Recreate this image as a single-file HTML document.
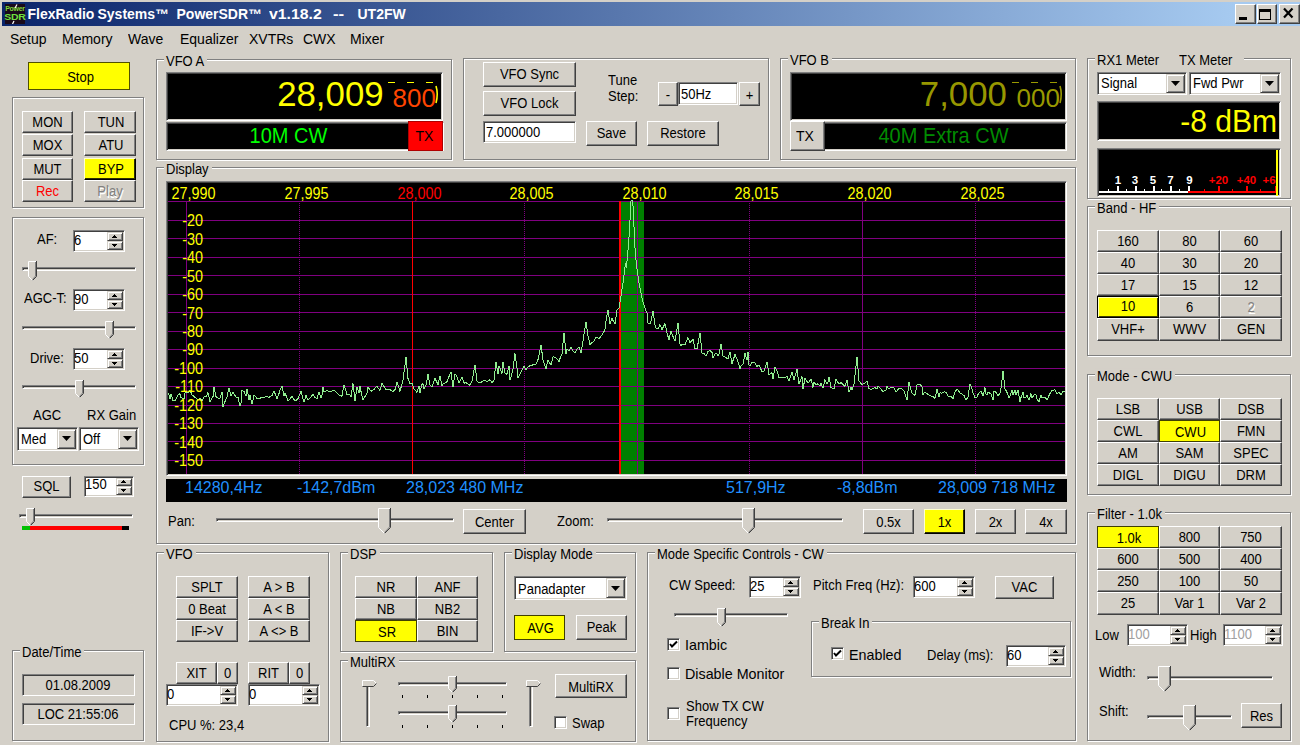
<!DOCTYPE html>
<html><head><meta charset="utf-8"><style>
html,body{margin:0;padding:0;width:1300px;height:745px;overflow:hidden;background:#D4D0C8;}
body{position:relative;font-family:"Liberation Sans",sans-serif;font-size:13px;color:#000;}
body>div,body>svg{position:absolute;box-sizing:border-box;}
.t{white-space:pre;}
.b{overflow:hidden;}
svg text{font-family:"Liberation Sans",sans-serif;}
</style></head><body>
<div style="left:0;top:0;width:1300px;height:745px;background:#D4D0C8;"></div>
<div style="left:2px;top:2px;width:1298px;height:24px;background:linear-gradient(to right,#0A246A 0px,#A6CAF0 1232px);"></div>
<div style="left:5px;top:4px;width:20px;height:20px;background:#1a0a1a;"></div>
<div class="t" style="left:5px;top:5px;width:20px;font-size:7px;line-height:7px;color:#7ed63a;font-weight:bold;text-align:center;letter-spacing:-0.3px">Power</div>
<div class="t" style="left:4px;top:12px;width:22px;font-size:10.5px;line-height:10px;color:#6ee040;font-weight:bold;text-align:center;letter-spacing:-0.3px;transform:scaleY(0.85);">SDR</div>
<svg style="left:5px;top:4px" width="20" height="20"><path d="M12,0.5 L10,4" stroke="#fff" stroke-width="1.2"/><path d="M9,17 L7.5,20" stroke="#fff" stroke-width="1.2"/></svg>
<div class="t" style="left:27.5px;top:7.15px;font-size:14px;line-height:14px;color:#fff;font-weight:bold;white-space:pre;transform:scaleX(1);transform-origin:left;">FlexRadio</div>
<div class="t" style="left:97.5px;top:7.15px;font-size:14px;line-height:14px;color:#fff;font-weight:bold;white-space:pre;transform:scaleX(1);transform-origin:left;">Systems™</div>
<div class="t" style="left:176.5px;top:7.15px;font-size:14px;line-height:14px;color:#fff;font-weight:bold;white-space:pre;transform:scaleX(1);transform-origin:left;">PowerSDR™</div>
<div class="t" style="left:268.5px;top:7.15px;font-size:14px;line-height:14px;color:#fff;font-weight:bold;white-space:pre;transform:scaleX(1.13);transform-origin:left;">v1.18.2</div>
<div class="t" style="left:333px;top:7.15px;font-size:14px;line-height:14px;color:#fff;font-weight:bold;white-space:pre;transform:scaleX(1.2);transform-origin:left;">--</div>
<div class="t" style="left:357.5px;top:7.15px;font-size:14px;line-height:14px;color:#fff;font-weight:bold;white-space:pre;transform:scaleX(1);transform-origin:left;">UT2FW</div>
<div style="left:1235px;top:4px;width:21px;height:20px;background:#D4D0C8;border-top:1px solid #fff;border-left:1px solid #fff;border-right:1px solid #404040;border-bottom:1px solid #404040;box-shadow:inset -1px -1px 0 #808080;"></div>
<div style="left:1257px;top:4px;width:20px;height:20px;background:#D4D0C8;border-top:1px solid #fff;border-left:1px solid #fff;border-right:1px solid #404040;border-bottom:1px solid #404040;box-shadow:inset -1px -1px 0 #808080;"></div>
<div style="left:1279px;top:4px;width:21px;height:20px;background:#D4D0C8;border-top:1px solid #fff;border-left:1px solid #fff;border-right:1px solid #404040;border-bottom:1px solid #404040;box-shadow:inset -1px -1px 0 #808080;"></div>
<div style="left:1239px;top:17px;width:8px;height:3px;background:#000;"></div>
<div style="left:1259px;top:9px;width:12px;height:11px;border:1px solid #000;border-top:3px solid #000;box-sizing:border-box;"></div>
<svg style="left:1282px;top:7px" width="13" height="13"><path d="M2,1.5 L10.5,10.5 M10.5,1.5 L2,10.5" stroke="#000" stroke-width="2.2"/></svg>
<div class="t" style="left:10px;top:32.15px;font-size:14px;line-height:14px;color:#000;font-weight:normal;transform:scaleY(1.1);transform-origin:50% 11.85px;">Setup</div>
<div class="t" style="left:62px;top:32.15px;font-size:14px;line-height:14px;color:#000;font-weight:normal;transform:scaleY(1.1);transform-origin:50% 11.85px;">Memory</div>
<div class="t" style="left:128px;top:32.15px;font-size:14px;line-height:14px;color:#000;font-weight:normal;transform:scaleY(1.1);transform-origin:50% 11.85px;">Wave</div>
<div class="t" style="left:180px;top:32.15px;font-size:14px;line-height:14px;color:#000;font-weight:normal;transform:scaleY(1.1);transform-origin:50% 11.85px;">Equalizer</div>
<div class="t" style="left:249px;top:32.15px;font-size:14px;line-height:14px;color:#000;font-weight:normal;transform:scaleY(1.1);transform-origin:50% 11.85px;">XVTRs</div>
<div class="t" style="left:303px;top:32.15px;font-size:14px;line-height:14px;color:#000;font-weight:normal;transform:scaleY(1.1);transform-origin:50% 11.85px;">CWX</div>
<div class="t" style="left:350px;top:32.15px;font-size:14px;line-height:14px;color:#000;font-weight:normal;transform:scaleY(1.1);transform-origin:50% 11.85px;">Mixer</div>
<div class="b" style="left:28px;top:62px;width:102px;height:28px;background:#FFFF00;border:1px solid #505000;"><span style="position:absolute;left:3px;right:0;top:0px;bottom:0;display:flex;align-items:center;justify-content:center;font-size:13px;color:#000;transform:scaleY(1.1);">Stop</span></div>
<div style="left:12px;top:97px;width:132px;height:111px;border:1px solid #808080;box-sizing:border-box;box-shadow:1px 1px 0 #fff, inset 1px 1px 0 #fff;"></div>
<div class="b" style="left:22px;top:111px;width:51px;height:22px;background:#D4D0C8;border-top:1px solid #fff;border-left:1px solid #fff;border-right:1px solid #404040;border-bottom:1px solid #404040;box-shadow:inset -1px -1px 0 #808080;"><span style="position:absolute;left:0px;right:0;top:-2px;bottom:0;display:flex;align-items:center;justify-content:center;font-size:13px;color:#000;transform:scaleY(1.1);">MON</span></div>
<div class="b" style="left:84px;top:111px;width:52px;height:22px;background:#D4D0C8;border-top:1px solid #fff;border-left:1px solid #fff;border-right:1px solid #404040;border-bottom:1px solid #404040;box-shadow:inset -1px -1px 0 #808080;"><span style="position:absolute;left:2px;right:0;top:-2px;bottom:0;display:flex;align-items:center;justify-content:center;font-size:13px;color:#000;transform:scaleY(1.1);">TUN</span></div>
<div class="b" style="left:22px;top:134px;width:51px;height:22px;background:#D4D0C8;border-top:1px solid #fff;border-left:1px solid #fff;border-right:1px solid #404040;border-bottom:1px solid #404040;box-shadow:inset -1px -1px 0 #808080;"><span style="position:absolute;left:0px;right:0;top:-0.2px;bottom:0;display:flex;align-items:center;justify-content:center;font-size:13px;color:#000;transform:scaleY(1.1);">MOX</span></div>
<div class="b" style="left:84px;top:134px;width:52px;height:22px;background:#D4D0C8;border-top:1px solid #fff;border-left:1px solid #fff;border-right:1px solid #404040;border-bottom:1px solid #404040;box-shadow:inset -1px -1px 0 #808080;"><span style="position:absolute;left:2px;right:0;top:-0.2px;bottom:0;display:flex;align-items:center;justify-content:center;font-size:13px;color:#000;transform:scaleY(1.1);">ATU</span></div>
<div class="b" style="left:22px;top:158px;width:51px;height:22px;background:#D4D0C8;border-top:1px solid #fff;border-left:1px solid #fff;border-right:1px solid #404040;border-bottom:1px solid #404040;box-shadow:inset -1px -1px 0 #808080;"><span style="position:absolute;left:0px;right:0;top:-0.2px;bottom:0;display:flex;align-items:center;justify-content:center;font-size:13px;color:#000;transform:scaleY(1.1);">MUT</span></div>
<div class="b" style="left:84px;top:158px;width:52px;height:22px;background:#FFFF00;border-top:1px solid #FFFFD0;border-left:1px solid #FFFFD0;border-right:1px solid #000;border-bottom:1px solid #000;box-shadow:inset -1px -1px 0 #303000;"><span style="position:absolute;left:2px;right:0;top:-0.2px;bottom:0;display:flex;align-items:center;justify-content:center;font-size:13px;color:#000;transform:scaleY(1.1);">BYP</span></div>
<div class="b" style="left:22px;top:180px;width:51px;height:22px;background:#D4D0C8;border-top:1px solid #fff;border-left:1px solid #fff;border-right:1px solid #404040;border-bottom:1px solid #404040;box-shadow:inset -1px -1px 0 #808080;"><span style="position:absolute;left:0px;right:0;top:-0.2px;bottom:0;display:flex;align-items:center;justify-content:center;font-size:13px;color:#FF0000;transform:scaleY(1.1);">Rec</span></div>
<div class="b" style="left:84px;top:180px;width:52px;height:22px;background:#D4D0C8;border-top:1px solid #fff;border-left:1px solid #fff;border-right:1px solid #404040;border-bottom:1px solid #404040;box-shadow:inset -1px -1px 0 #808080;"><span style="position:absolute;left:0px;right:0;top:-0.2px;bottom:0;display:flex;align-items:center;justify-content:center;font-size:13px;color:#808080;text-shadow:1px 1px 0 #fff;transform:scaleY(1.1);">Play</span></div>
<div style="left:12px;top:217px;width:132px;height:248px;border:1px solid #808080;box-sizing:border-box;box-shadow:1px 1px 0 #fff, inset 1px 1px 0 #fff;"></div>
<div class="t" style="left:37px;top:233.00px;font-size:13px;line-height:13px;color:#000;font-weight:normal;transform:scaleY(1.1);transform-origin:50% 11.00px;">AF:</div>
<div class="b" style="left:73px;top:230px;width:52px;height:22px;background:#fff;border-top:1px solid #808080;border-left:1px solid #808080;border-right:1px solid #fff;border-bottom:1px solid #fff;box-shadow:inset 1px 1px 0 #404040, inset -1px -1px 0 #D4D0C8;"><span style="position:absolute;left:0px;top:-2px;bottom:2px;display:flex;align-items:center;font-size:13px;color:#000;transform:scaleY(1.1);">6</span></div>
<div style="left:107px;top:232px;width:16px;height:9px;background:#D4D0C8;border-top:1px solid #D4D0C8;border-left:1px solid #D4D0C8;border-right:1px solid #404040;border-bottom:1px solid #404040;box-shadow:inset 1px 1px 0 #fff, inset -1px -1px 0 #808080;"></div>
<svg style="left:112px;top:235px" width="5" height="3"><rect x="2" y="0" width="1" height="1"/><rect x="1" y="1" width="3" height="1"/><rect x="0" y="2" width="5" height="1"/></svg>
<div style="left:107px;top:241px;width:16px;height:9px;background:#D4D0C8;border-top:1px solid #D4D0C8;border-left:1px solid #D4D0C8;border-right:1px solid #404040;border-bottom:1px solid #404040;box-shadow:inset 1px 1px 0 #fff, inset -1px -1px 0 #808080;"></div>
<svg style="left:112px;top:244px" width="5" height="3"><rect x="0" y="0" width="5" height="1"/><rect x="1" y="1" width="3" height="1"/><rect x="2" y="2" width="1" height="1"/></svg>
<div style="left:22px;top:267px;width:114px;height:4px;border-top:1px solid #808080;border-left:1px solid #808080;border-right:1px solid #fff;border-bottom:1px solid #fff;box-shadow:inset 1px 1px 0 #404040;"></div>
<svg style="left:28px;top:261px" width="9" height="20"><polygon points="0.5,0.5 8.5,0.5 8.5,15.5 4.5,19.5 0.5,15.5" fill="#D4D0C8"/><polyline points="0.5,15.5 0.5,0.5 8,0.5" fill="none" stroke="#fff" stroke-width="1"/><polyline points="8.5,0 8.5,15.5 4.5,19.5" fill="none" stroke="#404040" stroke-width="1"/><polyline points="7.5,1 7.5,15.0 4.5,18.5" fill="none" stroke="#808080" stroke-width="1"/><polyline points="0.5,15.5 4.5,19.5" fill="none" stroke="#fff" stroke-width="1"/></svg>
<div class="t" style="left:24px;top:292.00px;font-size:13px;line-height:13px;color:#000;font-weight:normal;transform:scaleY(1.1);transform-origin:50% 11.00px;">AGC-T:</div>
<div class="b" style="left:73px;top:289px;width:52px;height:22px;background:#fff;border-top:1px solid #808080;border-left:1px solid #808080;border-right:1px solid #fff;border-bottom:1px solid #fff;box-shadow:inset 1px 1px 0 #404040, inset -1px -1px 0 #D4D0C8;"><span style="position:absolute;left:0px;top:-2px;bottom:2px;display:flex;align-items:center;font-size:13px;color:#000;transform:scaleY(1.1);">90</span></div>
<div style="left:107px;top:291px;width:16px;height:9px;background:#D4D0C8;border-top:1px solid #D4D0C8;border-left:1px solid #D4D0C8;border-right:1px solid #404040;border-bottom:1px solid #404040;box-shadow:inset 1px 1px 0 #fff, inset -1px -1px 0 #808080;"></div>
<svg style="left:112px;top:294px" width="5" height="3"><rect x="2" y="0" width="1" height="1"/><rect x="1" y="1" width="3" height="1"/><rect x="0" y="2" width="5" height="1"/></svg>
<div style="left:107px;top:300px;width:16px;height:9px;background:#D4D0C8;border-top:1px solid #D4D0C8;border-left:1px solid #D4D0C8;border-right:1px solid #404040;border-bottom:1px solid #404040;box-shadow:inset 1px 1px 0 #fff, inset -1px -1px 0 #808080;"></div>
<svg style="left:112px;top:303px" width="5" height="3"><rect x="0" y="0" width="5" height="1"/><rect x="1" y="1" width="3" height="1"/><rect x="2" y="2" width="1" height="1"/></svg>
<div style="left:22px;top:326px;width:114px;height:4px;border-top:1px solid #808080;border-left:1px solid #808080;border-right:1px solid #fff;border-bottom:1px solid #fff;box-shadow:inset 1px 1px 0 #404040;"></div>
<svg style="left:105px;top:321px" width="9" height="18"><polygon points="0.5,0.5 8.5,0.5 8.5,13.5 4.5,17.5 0.5,13.5" fill="#D4D0C8"/><polyline points="0.5,13.5 0.5,0.5 8,0.5" fill="none" stroke="#fff" stroke-width="1"/><polyline points="8.5,0 8.5,13.5 4.5,17.5" fill="none" stroke="#404040" stroke-width="1"/><polyline points="7.5,1 7.5,13.0 4.5,16.5" fill="none" stroke="#808080" stroke-width="1"/><polyline points="0.5,13.5 4.5,17.5" fill="none" stroke="#fff" stroke-width="1"/></svg>
<div class="t" style="left:30px;top:352.00px;font-size:13px;line-height:13px;color:#000;font-weight:normal;transform:scaleY(1.1);transform-origin:50% 11.00px;">Drive:</div>
<div class="b" style="left:73px;top:348px;width:52px;height:22px;background:#fff;border-top:1px solid #808080;border-left:1px solid #808080;border-right:1px solid #fff;border-bottom:1px solid #fff;box-shadow:inset 1px 1px 0 #404040, inset -1px -1px 0 #D4D0C8;"><span style="position:absolute;left:0px;top:-2px;bottom:2px;display:flex;align-items:center;font-size:13px;color:#000;transform:scaleY(1.1);">50</span></div>
<div style="left:107px;top:350px;width:16px;height:9px;background:#D4D0C8;border-top:1px solid #D4D0C8;border-left:1px solid #D4D0C8;border-right:1px solid #404040;border-bottom:1px solid #404040;box-shadow:inset 1px 1px 0 #fff, inset -1px -1px 0 #808080;"></div>
<svg style="left:112px;top:353px" width="5" height="3"><rect x="2" y="0" width="1" height="1"/><rect x="1" y="1" width="3" height="1"/><rect x="0" y="2" width="5" height="1"/></svg>
<div style="left:107px;top:359px;width:16px;height:9px;background:#D4D0C8;border-top:1px solid #D4D0C8;border-left:1px solid #D4D0C8;border-right:1px solid #404040;border-bottom:1px solid #404040;box-shadow:inset 1px 1px 0 #fff, inset -1px -1px 0 #808080;"></div>
<svg style="left:112px;top:362px" width="5" height="3"><rect x="0" y="0" width="5" height="1"/><rect x="1" y="1" width="3" height="1"/><rect x="2" y="2" width="1" height="1"/></svg>
<div style="left:22px;top:385px;width:114px;height:4px;border-top:1px solid #808080;border-left:1px solid #808080;border-right:1px solid #fff;border-bottom:1px solid #fff;box-shadow:inset 1px 1px 0 #404040;"></div>
<svg style="left:75px;top:380px" width="9" height="18"><polygon points="0.5,0.5 8.5,0.5 8.5,13.5 4.5,17.5 0.5,13.5" fill="#D4D0C8"/><polyline points="0.5,13.5 0.5,0.5 8,0.5" fill="none" stroke="#fff" stroke-width="1"/><polyline points="8.5,0 8.5,13.5 4.5,17.5" fill="none" stroke="#404040" stroke-width="1"/><polyline points="7.5,1 7.5,13.0 4.5,16.5" fill="none" stroke="#808080" stroke-width="1"/><polyline points="0.5,13.5 4.5,17.5" fill="none" stroke="#fff" stroke-width="1"/></svg>
<div class="t" style="left:33px;top:409.00px;font-size:13px;line-height:13px;color:#000;font-weight:normal;transform:scaleY(1.1);transform-origin:50% 11.00px;">AGC</div>
<div class="t" style="left:87px;top:409.00px;font-size:13px;line-height:13px;color:#000;font-weight:normal;transform:scaleY(1.1);transform-origin:50% 11.00px;">RX Gain</div>
<div class="b" style="left:17px;top:427px;width:61px;height:24px;background:#fff;border-top:1px solid #808080;border-left:1px solid #808080;border-right:1px solid #fff;border-bottom:1px solid #fff;box-shadow:inset 1px 1px 0 #404040, inset -1px -1px 0 #D4D0C8;"><span style="position:absolute;left:3px;top:0px;bottom:0px;display:flex;align-items:center;font-size:13px;color:#000;transform:scaleY(1.1);">Med</span></div>
<div style="left:57px;top:429px;width:19px;height:20px;background:#D4D0C8;border-top:1px solid #D4D0C8;border-left:1px solid #D4D0C8;border-right:1px solid #404040;border-bottom:1px solid #404040;box-shadow:inset 1px 1px 0 #fff, inset -1px -1px 0 #808080;"></div>
<svg style="left:62px;top:436px" width="9" height="5"><polygon points="0,0 9,0 4.5,5" fill="#000"/></svg>
<div class="b" style="left:79px;top:427px;width:60px;height:24px;background:#fff;border-top:1px solid #808080;border-left:1px solid #808080;border-right:1px solid #fff;border-bottom:1px solid #fff;box-shadow:inset 1px 1px 0 #404040, inset -1px -1px 0 #D4D0C8;"><span style="position:absolute;left:3px;top:0px;bottom:0px;display:flex;align-items:center;font-size:13px;color:#000;transform:scaleY(1.1);">Off</span></div>
<div style="left:118px;top:429px;width:19px;height:20px;background:#D4D0C8;border-top:1px solid #D4D0C8;border-left:1px solid #D4D0C8;border-right:1px solid #404040;border-bottom:1px solid #404040;box-shadow:inset 1px 1px 0 #fff, inset -1px -1px 0 #808080;"></div>
<svg style="left:123px;top:436px" width="9" height="5"><polygon points="0,0 9,0 4.5,5" fill="#000"/></svg>
<div class="b" style="left:22px;top:476px;width:49px;height:22px;background:#D4D0C8;border-top:1px solid #fff;border-left:1px solid #fff;border-right:1px solid #404040;border-bottom:1px solid #404040;box-shadow:inset -1px -1px 0 #808080;"><span style="position:absolute;left:0px;right:0;top:-2px;bottom:0;display:flex;align-items:center;justify-content:center;font-size:13px;color:#000;transform:scaleY(1.1);">SQL</span></div>
<div class="b" style="left:84px;top:476px;width:50px;height:21px;background:#fff;border-top:1px solid #808080;border-left:1px solid #808080;border-right:1px solid #fff;border-bottom:1px solid #fff;box-shadow:inset 1px 1px 0 #404040, inset -1px -1px 0 #D4D0C8;"><span style="position:absolute;left:0px;top:-2px;bottom:2px;display:flex;align-items:center;font-size:13px;color:#000;transform:scaleY(1.1);">150</span></div>
<div style="left:116px;top:478px;width:16px;height:8px;background:#D4D0C8;border-top:1px solid #D4D0C8;border-left:1px solid #D4D0C8;border-right:1px solid #404040;border-bottom:1px solid #404040;box-shadow:inset 1px 1px 0 #fff, inset -1px -1px 0 #808080;"></div>
<svg style="left:121px;top:480px" width="5" height="3"><rect x="2" y="0" width="1" height="1"/><rect x="1" y="1" width="3" height="1"/><rect x="0" y="2" width="5" height="1"/></svg>
<div style="left:116px;top:486px;width:16px;height:9px;background:#D4D0C8;border-top:1px solid #D4D0C8;border-left:1px solid #D4D0C8;border-right:1px solid #404040;border-bottom:1px solid #404040;box-shadow:inset 1px 1px 0 #fff, inset -1px -1px 0 #808080;"></div>
<svg style="left:121px;top:489px" width="5" height="3"><rect x="0" y="0" width="5" height="1"/><rect x="1" y="1" width="3" height="1"/><rect x="2" y="2" width="1" height="1"/></svg>
<div style="left:19px;top:514px;width:114px;height:4px;border-top:1px solid #808080;border-left:1px solid #808080;border-right:1px solid #fff;border-bottom:1px solid #fff;box-shadow:inset 1px 1px 0 #404040;"></div>
<svg style="left:26px;top:508px" width="9" height="18"><polygon points="0.5,0.5 8.5,0.5 8.5,13.5 4.5,17.5 0.5,13.5" fill="#D4D0C8"/><polyline points="0.5,13.5 0.5,0.5 8,0.5" fill="none" stroke="#fff" stroke-width="1"/><polyline points="8.5,0 8.5,13.5 4.5,17.5" fill="none" stroke="#404040" stroke-width="1"/><polyline points="7.5,1 7.5,13.0 4.5,16.5" fill="none" stroke="#808080" stroke-width="1"/><polyline points="0.5,13.5 4.5,17.5" fill="none" stroke="#fff" stroke-width="1"/></svg>
<div style="left:22px;top:526px;width:8px;height:4px;background:#00C000;"></div>
<div style="left:30px;top:526px;width:92px;height:4px;background:#FF0000;"></div>
<div style="left:122px;top:526px;width:7px;height:4px;background:#000;"></div>
<div style="left:12px;top:650px;width:132px;height:91px;border:1px solid #808080;box-sizing:border-box;box-shadow:1px 1px 0 #fff, inset 1px 1px 0 #fff;"></div>
<div class="t" style="left:20px;top:646.00px;font-size:13px;line-height:13px;background:#D4D0C8;padding:0 3px 0 2px;transform:scaleY(1.1);transform-origin:50% 11.00px;">Date/Time</div>
<div style="left:22px;top:674px;width:113px;height:22px;background:#D4D0C8;border-top:1px solid #808080;border-left:1px solid #808080;border-right:1px solid #fff;border-bottom:1px solid #fff;box-shadow:inset 1px 1px 0 #404040, inset -1px -1px 0 #D4D0C8;"></div>
<div class="t" style="left:-122px;width:400px;text-align:center;top:679.00px;font-size:13px;line-height:13px;color:#000;font-weight:normal;transform:scaleY(1.1);transform-origin:50% 11.00px;">01.08.2009</div>
<div style="left:22px;top:703px;width:113px;height:22px;background:#D4D0C8;border-top:1px solid #808080;border-left:1px solid #808080;border-right:1px solid #fff;border-bottom:1px solid #fff;box-shadow:inset 1px 1px 0 #404040, inset -1px -1px 0 #D4D0C8;"></div>
<div class="t" style="left:-122px;width:400px;text-align:center;top:708.00px;font-size:13px;line-height:13px;color:#000;font-weight:normal;transform:scaleY(1.1);transform-origin:50% 11.00px;">LOC 21:55:06</div>
<div style="left:156px;top:59px;width:296px;height:101px;border:1px solid #808080;box-sizing:border-box;box-shadow:1px 1px 0 #fff, inset 1px 1px 0 #fff;"></div>
<div class="t" style="left:164px;top:55.00px;font-size:13px;line-height:13px;background:#D4D0C8;padding:0 3px 0 2px;transform:scaleY(1.1);transform-origin:50% 11.00px;">VFO A</div>
<div style="left:166px;top:72px;width:277px;height:49px;background:#000;border-top:1px solid #808080;border-left:1px solid #808080;border-right:1px solid #fff;border-bottom:1px solid #fff;box-shadow:inset 1px 1px 0 #404040, inset -1px -1px 0 #D4D0C8;"></div>
<div style="left:166px;top:122px;width:278px;height:29px;background:#000;border-top:1px solid #808080;border-left:1px solid #808080;border-right:1px solid #fff;border-bottom:1px solid #fff;box-shadow:inset 1px 1px 0 #404040, inset -1px -1px 0 #D4D0C8;"></div>
<div class="t" style="right:916.5px;top:76.95px;font-size:35.5px;line-height:35.5px;color:#FFFF00;font-weight:normal;text-align:right;transform:scaleX(0.98);transform-origin:right;">28,009</div>
<div class="t" style="right:864px;top:85.49px;font-size:26px;line-height:26px;color:#FF4500;font-weight:normal;text-align:right;">800</div>
<div style="left:388px;top:82px;width:7px;height:1px;background:#FFFF00;"></div>
<div style="left:407px;top:82px;width:7px;height:1px;background:#FFFF00;"></div>
<div style="left:426px;top:82px;width:7px;height:1px;background:#FFFF00;"></div>
<svg style="left:434px;top:85px" width="6" height="19"><path d="M2,1 Q4.5,9 2,18" fill="none" stroke="#FFFF00" stroke-width="1.6"/></svg>
<div class="t" style="left:88.5px;width:400px;text-align:center;top:126.07px;font-size:20px;line-height:20px;color:#00FF00;font-weight:normal;transform:scaleY(1.08);transform-origin:50% 16.93px;">10M CW</div>
<div class="b" style="left:408px;top:121px;width:35px;height:30px;background:#FF0000;border:1px solid #B00000;"><span style="position:absolute;left:-2px;right:0;top:0px;bottom:0;display:flex;align-items:center;justify-content:center;font-size:14px;color:#000;transform:scaleY(1.1);">TX</span></div>
<div style="left:463px;top:58px;width:306px;height:102px;border:1px solid #808080;box-sizing:border-box;box-shadow:1px 1px 0 #fff, inset 1px 1px 0 #fff;"></div>
<div class="b" style="left:483px;top:62px;width:93px;height:25px;background:#D4D0C8;border-top:1px solid #fff;border-left:1px solid #fff;border-right:1px solid #404040;border-bottom:1px solid #404040;box-shadow:inset -1px -1px 0 #808080;"><span style="position:absolute;left:0px;right:0;top:0px;bottom:0;display:flex;align-items:center;justify-content:center;font-size:13px;color:#000;transform:scaleY(1.1);">VFO Sync</span></div>
<div class="b" style="left:483px;top:91px;width:93px;height:25px;background:#D4D0C8;border-top:1px solid #fff;border-left:1px solid #fff;border-right:1px solid #404040;border-bottom:1px solid #404040;box-shadow:inset -1px -1px 0 #808080;"><span style="position:absolute;left:0px;right:0;top:0px;bottom:0;display:flex;align-items:center;justify-content:center;font-size:13px;color:#000;transform:scaleY(1.1);">VFO Lock</span></div>
<div class="b" style="left:483px;top:121px;width:93px;height:22px;background:#fff;border-top:1px solid #808080;border-left:1px solid #808080;border-right:1px solid #fff;border-bottom:1px solid #fff;box-shadow:inset 1px 1px 0 #404040, inset -1px -1px 0 #D4D0C8;"><span style="position:absolute;left:2px;top:-1px;bottom:1px;display:flex;align-items:center;font-size:13px;color:#000;transform:scaleY(1.1);">7.000000</span></div>
<div class="b" style="left:586px;top:121px;width:51px;height:25px;background:#D4D0C8;border-top:1px solid #fff;border-left:1px solid #fff;border-right:1px solid #404040;border-bottom:1px solid #404040;box-shadow:inset -1px -1px 0 #808080;"><span style="position:absolute;left:0px;right:0;top:0px;bottom:0;display:flex;align-items:center;justify-content:center;font-size:13px;color:#000;transform:scaleY(1.1);">Save</span></div>
<div class="b" style="left:647px;top:121px;width:72px;height:25px;background:#D4D0C8;border-top:1px solid #fff;border-left:1px solid #fff;border-right:1px solid #404040;border-bottom:1px solid #404040;box-shadow:inset -1px -1px 0 #808080;"><span style="position:absolute;left:0px;right:0;top:0px;bottom:0;display:flex;align-items:center;justify-content:center;font-size:13px;color:#000;transform:scaleY(1.1);">Restore</span></div>
<div class="t" style="left:608px;top:74.00px;font-size:13px;line-height:13px;color:#000;font-weight:normal;transform:scaleY(1.1);transform-origin:50% 11.00px;">Tune</div>
<div class="t" style="left:608px;top:90.00px;font-size:13px;line-height:13px;color:#000;font-weight:normal;transform:scaleY(1.1);transform-origin:50% 11.00px;">Step:</div>
<div class="b" style="left:658px;top:82px;width:20px;height:24px;background:#D4D0C8;border-top:1px solid #fff;border-left:1px solid #fff;border-right:1px solid #404040;border-bottom:1px solid #404040;box-shadow:inset -1px -1px 0 #808080;"><span style="position:absolute;left:0px;right:0;top:0px;bottom:0;display:flex;align-items:center;justify-content:center;font-size:13px;color:#000;transform:scaleY(1.1);">-</span></div>
<div class="b" style="left:678px;top:82px;width:60px;height:23px;background:#fff;border-top:1px solid #808080;border-left:1px solid #808080;border-right:1px solid #fff;border-bottom:1px solid #fff;box-shadow:inset 1px 1px 0 #404040, inset -1px -1px 0 #D4D0C8;"><span style="position:absolute;left:2px;top:1px;bottom:-1px;display:flex;align-items:center;font-size:13px;color:#000;transform:scaleY(1.1);">50Hz</span></div>
<div class="b" style="left:739px;top:82px;width:21px;height:24px;background:#D4D0C8;border-top:1px solid #fff;border-left:1px solid #fff;border-right:1px solid #404040;border-bottom:1px solid #404040;box-shadow:inset -1px -1px 0 #808080;"><span style="position:absolute;left:0px;right:0;top:0px;bottom:0;display:flex;align-items:center;justify-content:center;font-size:13px;color:#000;transform:scaleY(1.1);">+</span></div>
<div style="left:780px;top:58px;width:296px;height:102px;border:1px solid #808080;box-sizing:border-box;box-shadow:1px 1px 0 #fff, inset 1px 1px 0 #fff;"></div>
<div class="t" style="left:788px;top:54.00px;font-size:13px;line-height:13px;background:#D4D0C8;padding:0 3px 0 2px;transform:scaleY(1.1);transform-origin:50% 11.00px;">VFO B</div>
<div style="left:790px;top:72px;width:277px;height:49px;background:#000;border-top:1px solid #808080;border-left:1px solid #808080;border-right:1px solid #fff;border-bottom:1px solid #fff;box-shadow:inset 1px 1px 0 #404040, inset -1px -1px 0 #D4D0C8;"></div>
<div style="left:790px;top:122px;width:277px;height:29px;background:#000;border-top:1px solid #808080;border-left:1px solid #808080;border-right:1px solid #fff;border-bottom:1px solid #fff;box-shadow:inset 1px 1px 0 #404040, inset -1px -1px 0 #D4D0C8;"></div>
<div class="t" style="right:293px;top:76.95px;font-size:35.5px;line-height:35.5px;color:#979700;font-weight:normal;text-align:right;transform:scaleX(0.98);transform-origin:right;">7,000</div>
<div class="t" style="right:240px;top:85.49px;font-size:26px;line-height:26px;color:#999900;font-weight:normal;text-align:right;">000</div>
<div style="left:1012px;top:82px;width:7px;height:1px;background:#999900;"></div>
<div style="left:1031px;top:82px;width:7px;height:1px;background:#999900;"></div>
<div style="left:1050px;top:82px;width:7px;height:1px;background:#999900;"></div>
<svg style="left:1058px;top:85px" width="6" height="19"><path d="M2,1 Q4.5,9 2,18" fill="none" stroke="#999900" stroke-width="1.6"/></svg>
<div class="b" style="left:790px;top:121px;width:35px;height:30px;background:#D4D0C8;border-top:1px solid #fff;border-left:1px solid #fff;border-right:1px solid #404040;border-bottom:1px solid #404040;box-shadow:inset -1px -1px 0 #808080;"><span style="position:absolute;left:-5px;right:0;top:0px;bottom:0;display:flex;align-items:center;justify-content:center;font-size:14px;color:#000;transform:scaleY(1.1);">TX</span></div>
<div class="t" style="left:743.5px;width:400px;text-align:center;top:126.07px;font-size:20px;line-height:20px;color:#008C00;font-weight:normal;transform:scaleY(1.08);transform-origin:50% 16.93px;">40M Extra CW</div>
<div style="left:1087px;top:58px;width:204px;height:141px;border:1px solid #808080;box-sizing:border-box;box-shadow:1px 1px 0 #fff, inset 1px 1px 0 #fff;"></div>
<div style="left:1095px;top:55px;width:149px;height:8px;background:#D4D0C8;"></div>
<div class="t" style="left:1097px;top:54.00px;font-size:13px;line-height:13px;color:#000;font-weight:normal;transform:scaleY(1.1);transform-origin:50% 11.00px;">RX1 Meter</div>
<div class="t" style="left:1179px;top:54.00px;font-size:13px;line-height:13px;color:#000;font-weight:normal;transform:scaleY(1.1);transform-origin:50% 11.00px;">TX Meter</div>
<div class="b" style="left:1097px;top:72px;width:90px;height:23px;background:#fff;border-top:1px solid #808080;border-left:1px solid #808080;border-right:1px solid #fff;border-bottom:1px solid #fff;box-shadow:inset 1px 1px 0 #404040, inset -1px -1px 0 #D4D0C8;"><span style="position:absolute;left:3px;top:0px;bottom:0px;display:flex;align-items:center;font-size:13px;color:#000;transform:scaleY(1.1);">Signal</span></div>
<div style="left:1166px;top:74px;width:19px;height:19px;background:#D4D0C8;border-top:1px solid #D4D0C8;border-left:1px solid #D4D0C8;border-right:1px solid #404040;border-bottom:1px solid #404040;box-shadow:inset 1px 1px 0 #fff, inset -1px -1px 0 #808080;"></div>
<svg style="left:1171px;top:81px" width="9" height="5"><polygon points="0,0 9,0 4.5,5" fill="#000"/></svg>
<div class="b" style="left:1189px;top:72px;width:92px;height:23px;background:#fff;border-top:1px solid #808080;border-left:1px solid #808080;border-right:1px solid #fff;border-bottom:1px solid #fff;box-shadow:inset 1px 1px 0 #404040, inset -1px -1px 0 #D4D0C8;"><span style="position:absolute;left:3px;top:0px;bottom:0px;display:flex;align-items:center;font-size:13px;color:#000;transform:scaleY(1.1);">Fwd Pwr</span></div>
<div style="left:1260px;top:74px;width:19px;height:19px;background:#D4D0C8;border-top:1px solid #D4D0C8;border-left:1px solid #D4D0C8;border-right:1px solid #404040;border-bottom:1px solid #404040;box-shadow:inset 1px 1px 0 #fff, inset -1px -1px 0 #808080;"></div>
<svg style="left:1265px;top:81px" width="9" height="5"><polygon points="0,0 9,0 4.5,5" fill="#000"/></svg>
<div style="left:1097px;top:101px;width:184px;height:40px;background:#000;border-top:1px solid #808080;border-left:1px solid #808080;border-right:1px solid #fff;border-bottom:1px solid #fff;box-shadow:inset 1px 1px 0 #404040, inset -1px -1px 0 #D4D0C8;"></div>
<div class="t" style="right:23px;top:104.91px;font-size:32px;line-height:32px;color:#FFFF00;font-weight:normal;text-align:right;transform:scaleX(0.94);transform-origin:right;">-8 dBm</div>
<div style="left:1097px;top:148px;width:184px;height:49px;background:#000;border-top:1px solid #808080;border-left:1px solid #808080;border-right:1px solid #fff;border-bottom:1px solid #fff;box-shadow:inset 1px 1px 0 #404040, inset -1px -1px 0 #D4D0C8;"></div>
<div style="left:1087px;top:206px;width:204px;height:150px;border:1px solid #808080;box-sizing:border-box;box-shadow:1px 1px 0 #fff, inset 1px 1px 0 #fff;"></div>
<div class="t" style="left:1095px;top:202.00px;font-size:13px;line-height:13px;background:#D4D0C8;padding:0 3px 0 2px;transform:scaleY(1.1);transform-origin:50% 11.00px;">Band - HF</div>
<div class="b" style="left:1097px;top:230px;width:62px;height:22px;background:#D4D0C8;border-top:1px solid #fff;border-left:1px solid #fff;border-right:1px solid #404040;border-bottom:1px solid #404040;box-shadow:inset -1px -1px 0 #808080;"><span style="position:absolute;left:0px;right:0;top:-0.5px;bottom:0;display:flex;align-items:center;justify-content:center;font-size:13px;color:#000;transform:scaleY(1.1);">160</span></div>
<div class="b" style="left:1159px;top:230px;width:61px;height:22px;background:#D4D0C8;border-top:1px solid #fff;border-left:1px solid #fff;border-right:1px solid #404040;border-bottom:1px solid #404040;box-shadow:inset -1px -1px 0 #808080;"><span style="position:absolute;left:0px;right:0;top:-0.5px;bottom:0;display:flex;align-items:center;justify-content:center;font-size:13px;color:#000;transform:scaleY(1.1);">80</span></div>
<div class="b" style="left:1220px;top:230px;width:62px;height:22px;background:#D4D0C8;border-top:1px solid #fff;border-left:1px solid #fff;border-right:1px solid #404040;border-bottom:1px solid #404040;box-shadow:inset -1px -1px 0 #808080;"><span style="position:absolute;left:0px;right:0;top:-0.5px;bottom:0;display:flex;align-items:center;justify-content:center;font-size:13px;color:#000;transform:scaleY(1.1);">60</span></div>
<div class="b" style="left:1097px;top:252px;width:62px;height:22px;background:#D4D0C8;border-top:1px solid #fff;border-left:1px solid #fff;border-right:1px solid #404040;border-bottom:1px solid #404040;box-shadow:inset -1px -1px 0 #808080;"><span style="position:absolute;left:0px;right:0;top:-0.5px;bottom:0;display:flex;align-items:center;justify-content:center;font-size:13px;color:#000;transform:scaleY(1.1);">40</span></div>
<div class="b" style="left:1159px;top:252px;width:61px;height:22px;background:#D4D0C8;border-top:1px solid #fff;border-left:1px solid #fff;border-right:1px solid #404040;border-bottom:1px solid #404040;box-shadow:inset -1px -1px 0 #808080;"><span style="position:absolute;left:0px;right:0;top:-0.5px;bottom:0;display:flex;align-items:center;justify-content:center;font-size:13px;color:#000;transform:scaleY(1.1);">30</span></div>
<div class="b" style="left:1220px;top:252px;width:62px;height:22px;background:#D4D0C8;border-top:1px solid #fff;border-left:1px solid #fff;border-right:1px solid #404040;border-bottom:1px solid #404040;box-shadow:inset -1px -1px 0 #808080;"><span style="position:absolute;left:0px;right:0;top:-0.5px;bottom:0;display:flex;align-items:center;justify-content:center;font-size:13px;color:#000;transform:scaleY(1.1);">20</span></div>
<div class="b" style="left:1097px;top:274px;width:62px;height:22px;background:#D4D0C8;border-top:1px solid #fff;border-left:1px solid #fff;border-right:1px solid #404040;border-bottom:1px solid #404040;box-shadow:inset -1px -1px 0 #808080;"><span style="position:absolute;left:0px;right:0;top:-0.5px;bottom:0;display:flex;align-items:center;justify-content:center;font-size:13px;color:#000;transform:scaleY(1.1);">17</span></div>
<div class="b" style="left:1159px;top:274px;width:61px;height:22px;background:#D4D0C8;border-top:1px solid #fff;border-left:1px solid #fff;border-right:1px solid #404040;border-bottom:1px solid #404040;box-shadow:inset -1px -1px 0 #808080;"><span style="position:absolute;left:0px;right:0;top:-0.5px;bottom:0;display:flex;align-items:center;justify-content:center;font-size:13px;color:#000;transform:scaleY(1.1);">15</span></div>
<div class="b" style="left:1220px;top:274px;width:62px;height:22px;background:#D4D0C8;border-top:1px solid #fff;border-left:1px solid #fff;border-right:1px solid #404040;border-bottom:1px solid #404040;box-shadow:inset -1px -1px 0 #808080;"><span style="position:absolute;left:0px;right:0;top:-0.5px;bottom:0;display:flex;align-items:center;justify-content:center;font-size:13px;color:#000;transform:scaleY(1.1);">12</span></div>
<div class="b" style="left:1097px;top:296px;width:62px;height:22px;background:#FFFF00;border:1px solid #000;box-shadow:inset 1px 1px 0 #FFFFC0, inset -1px -1px 0 #404000;"><span style="position:absolute;left:0px;right:0;top:-2px;bottom:0;display:flex;align-items:center;justify-content:center;font-size:13px;color:#000;transform:scaleY(1.1);">10</span></div>
<div class="b" style="left:1159px;top:296px;width:61px;height:22px;background:#D4D0C8;border-top:1px solid #fff;border-left:1px solid #fff;border-right:1px solid #404040;border-bottom:1px solid #404040;box-shadow:inset -1px -1px 0 #808080;"><span style="position:absolute;left:0px;right:0;top:-0.5px;bottom:0;display:flex;align-items:center;justify-content:center;font-size:13px;color:#000;transform:scaleY(1.1);">6</span></div>
<div class="b" style="left:1220px;top:296px;width:62px;height:22px;background:#D4D0C8;border-top:1px solid #fff;border-left:1px solid #fff;border-right:1px solid #404040;border-bottom:1px solid #404040;box-shadow:inset -1px -1px 0 #808080;"><span style="position:absolute;left:0px;right:0;top:-0.5px;bottom:0;display:flex;align-items:center;justify-content:center;font-size:13px;color:#808080;text-shadow:1px 1px 0 #fff;transform:scaleY(1.1);">2</span></div>
<div class="b" style="left:1097px;top:318px;width:62px;height:23px;background:#D4D0C8;border-top:1px solid #fff;border-left:1px solid #fff;border-right:1px solid #404040;border-bottom:1px solid #404040;box-shadow:inset -1px -1px 0 #808080;"><span style="position:absolute;left:0px;right:0;top:-0.5px;bottom:0;display:flex;align-items:center;justify-content:center;font-size:13px;color:#000;transform:scaleY(1.1);">VHF+</span></div>
<div class="b" style="left:1159px;top:318px;width:61px;height:23px;background:#D4D0C8;border-top:1px solid #fff;border-left:1px solid #fff;border-right:1px solid #404040;border-bottom:1px solid #404040;box-shadow:inset -1px -1px 0 #808080;"><span style="position:absolute;left:0px;right:0;top:-0.5px;bottom:0;display:flex;align-items:center;justify-content:center;font-size:13px;color:#000;transform:scaleY(1.1);">WWV</span></div>
<div class="b" style="left:1220px;top:318px;width:62px;height:23px;background:#D4D0C8;border-top:1px solid #fff;border-left:1px solid #fff;border-right:1px solid #404040;border-bottom:1px solid #404040;box-shadow:inset -1px -1px 0 #808080;"><span style="position:absolute;left:0px;right:0;top:-0.5px;bottom:0;display:flex;align-items:center;justify-content:center;font-size:13px;color:#000;transform:scaleY(1.1);">GEN</span></div>
<div style="left:1087px;top:374px;width:204px;height:121px;border:1px solid #808080;box-sizing:border-box;box-shadow:1px 1px 0 #fff, inset 1px 1px 0 #fff;"></div>
<div class="t" style="left:1095px;top:370.00px;font-size:13px;line-height:13px;background:#D4D0C8;padding:0 3px 0 2px;transform:scaleY(1.1);transform-origin:50% 11.00px;">Mode - CWU</div>
<div class="b" style="left:1097px;top:398px;width:62px;height:22px;background:#D4D0C8;border-top:1px solid #fff;border-left:1px solid #fff;border-right:1px solid #404040;border-bottom:1px solid #404040;box-shadow:inset -1px -1px 0 #808080;"><span style="position:absolute;left:0px;right:0;top:-0.5px;bottom:0;display:flex;align-items:center;justify-content:center;font-size:13px;color:#000;transform:scaleY(1.1);">LSB</span></div>
<div class="b" style="left:1159px;top:398px;width:61px;height:22px;background:#D4D0C8;border-top:1px solid #fff;border-left:1px solid #fff;border-right:1px solid #404040;border-bottom:1px solid #404040;box-shadow:inset -1px -1px 0 #808080;"><span style="position:absolute;left:0px;right:0;top:-0.5px;bottom:0;display:flex;align-items:center;justify-content:center;font-size:13px;color:#000;transform:scaleY(1.1);">USB</span></div>
<div class="b" style="left:1220px;top:398px;width:62px;height:22px;background:#D4D0C8;border-top:1px solid #fff;border-left:1px solid #fff;border-right:1px solid #404040;border-bottom:1px solid #404040;box-shadow:inset -1px -1px 0 #808080;"><span style="position:absolute;left:0px;right:0;top:-0.5px;bottom:0;display:flex;align-items:center;justify-content:center;font-size:13px;color:#000;transform:scaleY(1.1);">DSB</span></div>
<div class="b" style="left:1097px;top:420px;width:62px;height:22px;background:#D4D0C8;border-top:1px solid #fff;border-left:1px solid #fff;border-right:1px solid #404040;border-bottom:1px solid #404040;box-shadow:inset -1px -1px 0 #808080;"><span style="position:absolute;left:0px;right:0;top:-0.5px;bottom:0;display:flex;align-items:center;justify-content:center;font-size:13px;color:#000;transform:scaleY(1.1);">CWL</span></div>
<div class="b" style="left:1159px;top:420px;width:61px;height:22px;background:#FFFF00;border:1px solid #404000;"><span style="position:absolute;left:2px;right:0;top:0px;bottom:0;display:flex;align-items:center;justify-content:center;font-size:13px;color:#000;transform:scaleY(1.1);">CWU</span></div>
<div class="b" style="left:1220px;top:420px;width:62px;height:22px;background:#D4D0C8;border-top:1px solid #fff;border-left:1px solid #fff;border-right:1px solid #404040;border-bottom:1px solid #404040;box-shadow:inset -1px -1px 0 #808080;"><span style="position:absolute;left:0px;right:0;top:-0.5px;bottom:0;display:flex;align-items:center;justify-content:center;font-size:13px;color:#000;transform:scaleY(1.1);">FMN</span></div>
<div class="b" style="left:1097px;top:442px;width:62px;height:22px;background:#D4D0C8;border-top:1px solid #fff;border-left:1px solid #fff;border-right:1px solid #404040;border-bottom:1px solid #404040;box-shadow:inset -1px -1px 0 #808080;"><span style="position:absolute;left:0px;right:0;top:-0.5px;bottom:0;display:flex;align-items:center;justify-content:center;font-size:13px;color:#000;transform:scaleY(1.1);">AM</span></div>
<div class="b" style="left:1159px;top:442px;width:61px;height:22px;background:#D4D0C8;border-top:1px solid #fff;border-left:1px solid #fff;border-right:1px solid #404040;border-bottom:1px solid #404040;box-shadow:inset -1px -1px 0 #808080;"><span style="position:absolute;left:0px;right:0;top:-0.5px;bottom:0;display:flex;align-items:center;justify-content:center;font-size:13px;color:#000;transform:scaleY(1.1);">SAM</span></div>
<div class="b" style="left:1220px;top:442px;width:62px;height:22px;background:#D4D0C8;border-top:1px solid #fff;border-left:1px solid #fff;border-right:1px solid #404040;border-bottom:1px solid #404040;box-shadow:inset -1px -1px 0 #808080;"><span style="position:absolute;left:0px;right:0;top:-0.5px;bottom:0;display:flex;align-items:center;justify-content:center;font-size:13px;color:#000;transform:scaleY(1.1);">SPEC</span></div>
<div class="b" style="left:1097px;top:464px;width:62px;height:22px;background:#D4D0C8;border-top:1px solid #fff;border-left:1px solid #fff;border-right:1px solid #404040;border-bottom:1px solid #404040;box-shadow:inset -1px -1px 0 #808080;"><span style="position:absolute;left:0px;right:0;top:-0.5px;bottom:0;display:flex;align-items:center;justify-content:center;font-size:13px;color:#000;transform:scaleY(1.1);">DIGL</span></div>
<div class="b" style="left:1159px;top:464px;width:61px;height:22px;background:#D4D0C8;border-top:1px solid #fff;border-left:1px solid #fff;border-right:1px solid #404040;border-bottom:1px solid #404040;box-shadow:inset -1px -1px 0 #808080;"><span style="position:absolute;left:0px;right:0;top:-0.5px;bottom:0;display:flex;align-items:center;justify-content:center;font-size:13px;color:#000;transform:scaleY(1.1);">DIGU</span></div>
<div class="b" style="left:1220px;top:464px;width:62px;height:22px;background:#D4D0C8;border-top:1px solid #fff;border-left:1px solid #fff;border-right:1px solid #404040;border-bottom:1px solid #404040;box-shadow:inset -1px -1px 0 #808080;"><span style="position:absolute;left:0px;right:0;top:-0.5px;bottom:0;display:flex;align-items:center;justify-content:center;font-size:13px;color:#000;transform:scaleY(1.1);">DRM</span></div>
<div style="left:1087px;top:512px;width:204px;height:229px;border:1px solid #808080;box-sizing:border-box;box-shadow:1px 1px 0 #fff, inset 1px 1px 0 #fff;"></div>
<div class="t" style="left:1095px;top:508.00px;font-size:13px;line-height:13px;background:#D4D0C8;padding:0 3px 0 2px;transform:scaleY(1.1);transform-origin:50% 11.00px;">Filter - 1.0k</div>
<div class="b" style="left:1097px;top:526px;width:62px;height:22px;background:#FFFF00;border:1px solid #404000;"><span style="position:absolute;left:2px;right:0;top:0px;bottom:0;display:flex;align-items:center;justify-content:center;font-size:13px;color:#000;transform:scaleY(1.1);">1.0k</span></div>
<div class="b" style="left:1159px;top:526px;width:61px;height:22px;background:#D4D0C8;border-top:1px solid #fff;border-left:1px solid #fff;border-right:1px solid #404040;border-bottom:1px solid #404040;box-shadow:inset -1px -1px 0 #808080;"><span style="position:absolute;left:0px;right:0;top:-0.5px;bottom:0;display:flex;align-items:center;justify-content:center;font-size:13px;color:#000;transform:scaleY(1.1);">800</span></div>
<div class="b" style="left:1220px;top:526px;width:62px;height:22px;background:#D4D0C8;border-top:1px solid #fff;border-left:1px solid #fff;border-right:1px solid #404040;border-bottom:1px solid #404040;box-shadow:inset -1px -1px 0 #808080;"><span style="position:absolute;left:0px;right:0;top:-0.5px;bottom:0;display:flex;align-items:center;justify-content:center;font-size:13px;color:#000;transform:scaleY(1.1);">750</span></div>
<div class="b" style="left:1097px;top:548px;width:62px;height:22px;background:#D4D0C8;border-top:1px solid #fff;border-left:1px solid #fff;border-right:1px solid #404040;border-bottom:1px solid #404040;box-shadow:inset -1px -1px 0 #808080;"><span style="position:absolute;left:0px;right:0;top:-0.5px;bottom:0;display:flex;align-items:center;justify-content:center;font-size:13px;color:#000;transform:scaleY(1.1);">600</span></div>
<div class="b" style="left:1159px;top:548px;width:61px;height:22px;background:#D4D0C8;border-top:1px solid #fff;border-left:1px solid #fff;border-right:1px solid #404040;border-bottom:1px solid #404040;box-shadow:inset -1px -1px 0 #808080;"><span style="position:absolute;left:0px;right:0;top:-0.5px;bottom:0;display:flex;align-items:center;justify-content:center;font-size:13px;color:#000;transform:scaleY(1.1);">500</span></div>
<div class="b" style="left:1220px;top:548px;width:62px;height:22px;background:#D4D0C8;border-top:1px solid #fff;border-left:1px solid #fff;border-right:1px solid #404040;border-bottom:1px solid #404040;box-shadow:inset -1px -1px 0 #808080;"><span style="position:absolute;left:0px;right:0;top:-0.5px;bottom:0;display:flex;align-items:center;justify-content:center;font-size:13px;color:#000;transform:scaleY(1.1);">400</span></div>
<div class="b" style="left:1097px;top:570px;width:62px;height:22px;background:#D4D0C8;border-top:1px solid #fff;border-left:1px solid #fff;border-right:1px solid #404040;border-bottom:1px solid #404040;box-shadow:inset -1px -1px 0 #808080;"><span style="position:absolute;left:0px;right:0;top:-0.5px;bottom:0;display:flex;align-items:center;justify-content:center;font-size:13px;color:#000;transform:scaleY(1.1);">250</span></div>
<div class="b" style="left:1159px;top:570px;width:61px;height:22px;background:#D4D0C8;border-top:1px solid #fff;border-left:1px solid #fff;border-right:1px solid #404040;border-bottom:1px solid #404040;box-shadow:inset -1px -1px 0 #808080;"><span style="position:absolute;left:0px;right:0;top:-0.5px;bottom:0;display:flex;align-items:center;justify-content:center;font-size:13px;color:#000;transform:scaleY(1.1);">100</span></div>
<div class="b" style="left:1220px;top:570px;width:62px;height:22px;background:#D4D0C8;border-top:1px solid #fff;border-left:1px solid #fff;border-right:1px solid #404040;border-bottom:1px solid #404040;box-shadow:inset -1px -1px 0 #808080;"><span style="position:absolute;left:0px;right:0;top:-0.5px;bottom:0;display:flex;align-items:center;justify-content:center;font-size:13px;color:#000;transform:scaleY(1.1);">50</span></div>
<div class="b" style="left:1097px;top:592px;width:62px;height:23px;background:#D4D0C8;border-top:1px solid #fff;border-left:1px solid #fff;border-right:1px solid #404040;border-bottom:1px solid #404040;box-shadow:inset -1px -1px 0 #808080;"><span style="position:absolute;left:0px;right:0;top:-0.5px;bottom:0;display:flex;align-items:center;justify-content:center;font-size:13px;color:#000;transform:scaleY(1.1);">25</span></div>
<div class="b" style="left:1159px;top:592px;width:61px;height:23px;background:#D4D0C8;border-top:1px solid #fff;border-left:1px solid #fff;border-right:1px solid #404040;border-bottom:1px solid #404040;box-shadow:inset -1px -1px 0 #808080;"><span style="position:absolute;left:0px;right:0;top:-0.5px;bottom:0;display:flex;align-items:center;justify-content:center;font-size:13px;color:#000;transform:scaleY(1.1);">Var 1</span></div>
<div class="b" style="left:1220px;top:592px;width:62px;height:23px;background:#D4D0C8;border-top:1px solid #fff;border-left:1px solid #fff;border-right:1px solid #404040;border-bottom:1px solid #404040;box-shadow:inset -1px -1px 0 #808080;"><span style="position:absolute;left:0px;right:0;top:-0.5px;bottom:0;display:flex;align-items:center;justify-content:center;font-size:13px;color:#000;transform:scaleY(1.1);">Var 2</span></div>
<div class="t" style="left:1095px;top:629.00px;font-size:13px;line-height:13px;color:#000;font-weight:normal;transform:scaleY(1.1);transform-origin:50% 11.00px;">Low</div>
<div class="b" style="left:1127px;top:624px;width:61px;height:22px;background:#fff;border-top:1px solid #808080;border-left:1px solid #808080;border-right:1px solid #fff;border-bottom:1px solid #fff;box-shadow:inset 1px 1px 0 #404040, inset -1px -1px 0 #D4D0C8;"><span style="position:absolute;left:0px;top:-2px;bottom:2px;display:flex;align-items:center;font-size:13px;color:#A0A0A0;transform:scaleY(1.1);">100</span></div>
<div style="left:1170px;top:626px;width:16px;height:9px;background:#D4D0C8;border-top:1px solid #D4D0C8;border-left:1px solid #D4D0C8;border-right:1px solid #404040;border-bottom:1px solid #404040;box-shadow:inset 1px 1px 0 #fff, inset -1px -1px 0 #808080;"></div>
<svg style="left:1175px;top:629px" width="5" height="3"><rect x="2" y="0" width="1" height="1"/><rect x="1" y="1" width="3" height="1"/><rect x="0" y="2" width="5" height="1"/></svg>
<div style="left:1170px;top:635px;width:16px;height:9px;background:#D4D0C8;border-top:1px solid #D4D0C8;border-left:1px solid #D4D0C8;border-right:1px solid #404040;border-bottom:1px solid #404040;box-shadow:inset 1px 1px 0 #fff, inset -1px -1px 0 #808080;"></div>
<svg style="left:1175px;top:638px" width="5" height="3"><rect x="0" y="0" width="5" height="1"/><rect x="1" y="1" width="3" height="1"/><rect x="2" y="2" width="1" height="1"/></svg>
<div class="t" style="left:1190px;top:629.00px;font-size:13px;line-height:13px;color:#000;font-weight:normal;transform:scaleY(1.1);transform-origin:50% 11.00px;">High</div>
<div class="b" style="left:1223px;top:624px;width:60px;height:22px;background:#fff;border-top:1px solid #808080;border-left:1px solid #808080;border-right:1px solid #fff;border-bottom:1px solid #fff;box-shadow:inset 1px 1px 0 #404040, inset -1px -1px 0 #D4D0C8;"><span style="position:absolute;left:0px;top:-2px;bottom:2px;display:flex;align-items:center;font-size:13px;color:#A0A0A0;transform:scaleY(1.1);">1100</span></div>
<div style="left:1265px;top:626px;width:16px;height:9px;background:#D4D0C8;border-top:1px solid #D4D0C8;border-left:1px solid #D4D0C8;border-right:1px solid #404040;border-bottom:1px solid #404040;box-shadow:inset 1px 1px 0 #fff, inset -1px -1px 0 #808080;"></div>
<svg style="left:1270px;top:629px" width="5" height="3"><rect x="2" y="0" width="1" height="1"/><rect x="1" y="1" width="3" height="1"/><rect x="0" y="2" width="5" height="1"/></svg>
<div style="left:1265px;top:635px;width:16px;height:9px;background:#D4D0C8;border-top:1px solid #D4D0C8;border-left:1px solid #D4D0C8;border-right:1px solid #404040;border-bottom:1px solid #404040;box-shadow:inset 1px 1px 0 #fff, inset -1px -1px 0 #808080;"></div>
<svg style="left:1270px;top:638px" width="5" height="3"><rect x="0" y="0" width="5" height="1"/><rect x="1" y="1" width="3" height="1"/><rect x="2" y="2" width="1" height="1"/></svg>
<div class="t" style="left:1099px;top:666.00px;font-size:13px;line-height:13px;color:#000;font-weight:normal;transform:scaleY(1.1);transform-origin:50% 11.00px;">Width:</div>
<div style="left:1147px;top:676px;width:126px;height:4px;border-top:1px solid #808080;border-left:1px solid #808080;border-right:1px solid #fff;border-bottom:1px solid #fff;box-shadow:inset 1px 1px 0 #404040;"></div>
<svg style="left:1158px;top:666px" width="13" height="26"><polygon points="0.5,0.5 12.5,0.5 12.5,19.5 6.5,25.5 0.5,19.5" fill="#D4D0C8"/><polyline points="0.5,19.5 0.5,0.5 12,0.5" fill="none" stroke="#fff" stroke-width="1"/><polyline points="12.5,0 12.5,19.5 6.5,25.5" fill="none" stroke="#404040" stroke-width="1"/><polyline points="11.5,1 11.5,19.0 6.5,24.5" fill="none" stroke="#808080" stroke-width="1"/><polyline points="0.5,19.5 6.5,25.5" fill="none" stroke="#fff" stroke-width="1"/></svg>
<div class="t" style="left:1099px;top:705.00px;font-size:13px;line-height:13px;color:#000;font-weight:normal;transform:scaleY(1.1);transform-origin:50% 11.00px;">Shift:</div>
<div style="left:1147px;top:715px;width:85px;height:4px;border-top:1px solid #808080;border-left:1px solid #808080;border-right:1px solid #fff;border-bottom:1px solid #fff;box-shadow:inset 1px 1px 0 #404040;"></div>
<svg style="left:1183px;top:705px" width="13" height="26"><polygon points="0.5,0.5 12.5,0.5 12.5,19.5 6.5,25.5 0.5,19.5" fill="#D4D0C8"/><polyline points="0.5,19.5 0.5,0.5 12,0.5" fill="none" stroke="#fff" stroke-width="1"/><polyline points="12.5,0 12.5,19.5 6.5,25.5" fill="none" stroke="#404040" stroke-width="1"/><polyline points="11.5,1 11.5,19.0 6.5,24.5" fill="none" stroke="#808080" stroke-width="1"/><polyline points="0.5,19.5 6.5,25.5" fill="none" stroke="#fff" stroke-width="1"/></svg>
<div class="b" style="left:1241px;top:703px;width:41px;height:25px;background:#D4D0C8;border-top:1px solid #fff;border-left:1px solid #fff;border-right:1px solid #404040;border-bottom:1px solid #404040;box-shadow:inset -1px -1px 0 #808080;"><span style="position:absolute;left:0px;right:0;top:0.5px;bottom:0;display:flex;align-items:center;justify-content:center;font-size:13px;color:#000;transform:scaleY(1.1);">Res</span></div>
<div style="left:156px;top:167px;width:920px;height:377px;border:1px solid #808080;box-sizing:border-box;box-shadow:1px 1px 0 #fff, inset 1px 1px 0 #fff;"></div>
<div class="t" style="left:164px;top:163.00px;font-size:13px;line-height:13px;background:#D4D0C8;padding:0 3px 0 2px;transform:scaleY(1.1);transform-origin:50% 11.00px;">Display</div>
<div style="left:166px;top:181px;width:901px;height:295px;background:#000;border-top:1px solid #808080;border-left:1px solid #808080;border-right:1px solid #fff;border-bottom:1px solid #fff;box-shadow:inset 1px 1px 0 #404040, inset -1px -1px 0 #D4D0C8;"></div>
<div style="left:166px;top:479px;width:901px;height:23px;background:#000;"></div>
<div style="left:156px;top:552px;width:173px;height:190px;border:1px solid #808080;box-sizing:border-box;box-shadow:1px 1px 0 #fff, inset 1px 1px 0 #fff;"></div>
<div class="t" style="left:164px;top:548.00px;font-size:13px;line-height:13px;background:#D4D0C8;padding:0 3px 0 2px;transform:scaleY(1.1);transform-origin:50% 11.00px;">VFO</div>
<div class="b" style="left:176px;top:576px;width:62px;height:22px;background:#D4D0C8;border-top:1px solid #fff;border-left:1px solid #fff;border-right:1px solid #404040;border-bottom:1px solid #404040;box-shadow:inset -1px -1px 0 #808080;"><span style="position:absolute;left:0px;right:0;top:-2px;bottom:0;display:flex;align-items:center;justify-content:center;font-size:13px;color:#000;transform:scaleY(1.1);">SPLT</span></div>
<div class="b" style="left:176px;top:598px;width:62px;height:22px;background:#D4D0C8;border-top:1px solid #fff;border-left:1px solid #fff;border-right:1px solid #404040;border-bottom:1px solid #404040;box-shadow:inset -1px -1px 0 #808080;"><span style="position:absolute;left:0px;right:0;top:-2px;bottom:0;display:flex;align-items:center;justify-content:center;font-size:13px;color:#000;transform:scaleY(1.1);">0 Beat</span></div>
<div class="b" style="left:176px;top:620px;width:62px;height:22px;background:#D4D0C8;border-top:1px solid #fff;border-left:1px solid #fff;border-right:1px solid #404040;border-bottom:1px solid #404040;box-shadow:inset -1px -1px 0 #808080;"><span style="position:absolute;left:0px;right:0;top:-2px;bottom:0;display:flex;align-items:center;justify-content:center;font-size:13px;color:#000;transform:scaleY(1.1);">IF-&gt;V</span></div>
<div class="b" style="left:248px;top:576px;width:62px;height:22px;background:#D4D0C8;border-top:1px solid #fff;border-left:1px solid #fff;border-right:1px solid #404040;border-bottom:1px solid #404040;box-shadow:inset -1px -1px 0 #808080;"><span style="position:absolute;left:0px;right:0;top:-2px;bottom:0;display:flex;align-items:center;justify-content:center;font-size:13px;color:#000;transform:scaleY(1.1);">A &gt; B</span></div>
<div class="b" style="left:248px;top:598px;width:62px;height:22px;background:#D4D0C8;border-top:1px solid #fff;border-left:1px solid #fff;border-right:1px solid #404040;border-bottom:1px solid #404040;box-shadow:inset -1px -1px 0 #808080;"><span style="position:absolute;left:0px;right:0;top:-2px;bottom:0;display:flex;align-items:center;justify-content:center;font-size:13px;color:#000;transform:scaleY(1.1);">A &lt; B</span></div>
<div class="b" style="left:248px;top:620px;width:62px;height:22px;background:#D4D0C8;border-top:1px solid #fff;border-left:1px solid #fff;border-right:1px solid #404040;border-bottom:1px solid #404040;box-shadow:inset -1px -1px 0 #808080;"><span style="position:absolute;left:0px;right:0;top:-2px;bottom:0;display:flex;align-items:center;justify-content:center;font-size:13px;color:#000;transform:scaleY(1.1);">A &lt;&gt; B</span></div>
<div class="b" style="left:176px;top:662px;width:41px;height:22px;background:#D4D0C8;border-top:1px solid #fff;border-left:1px solid #fff;border-right:1px solid #404040;border-bottom:1px solid #404040;box-shadow:inset -1px -1px 0 #808080;"><span style="position:absolute;left:0px;right:0;top:-2px;bottom:0;display:flex;align-items:center;justify-content:center;font-size:13px;color:#000;transform:scaleY(1.1);">XIT</span></div>
<div class="b" style="left:217px;top:662px;width:21px;height:22px;background:#D4D0C8;border-top:1px solid #fff;border-left:1px solid #fff;border-right:1px solid #404040;border-bottom:1px solid #404040;box-shadow:inset -1px -1px 0 #808080;"><span style="position:absolute;left:0px;right:0;top:-2px;bottom:0;display:flex;align-items:center;justify-content:center;font-size:13px;color:#000;transform:scaleY(1.1);">0</span></div>
<div class="b" style="left:248px;top:662px;width:41px;height:22px;background:#D4D0C8;border-top:1px solid #fff;border-left:1px solid #fff;border-right:1px solid #404040;border-bottom:1px solid #404040;box-shadow:inset -1px -1px 0 #808080;"><span style="position:absolute;left:0px;right:0;top:-2px;bottom:0;display:flex;align-items:center;justify-content:center;font-size:13px;color:#000;transform:scaleY(1.1);">RIT</span></div>
<div class="b" style="left:289px;top:662px;width:21px;height:22px;background:#D4D0C8;border-top:1px solid #fff;border-left:1px solid #fff;border-right:1px solid #404040;border-bottom:1px solid #404040;box-shadow:inset -1px -1px 0 #808080;"><span style="position:absolute;left:0px;right:0;top:-2px;bottom:0;display:flex;align-items:center;justify-content:center;font-size:13px;color:#000;transform:scaleY(1.1);">0</span></div>
<div class="b" style="left:166px;top:684px;width:72px;height:22px;background:#fff;border-top:1px solid #808080;border-left:1px solid #808080;border-right:1px solid #fff;border-bottom:1px solid #fff;box-shadow:inset 1px 1px 0 #404040, inset -1px -1px 0 #D4D0C8;"><span style="position:absolute;left:0px;top:-2px;bottom:2px;display:flex;align-items:center;font-size:13px;color:#000;transform:scaleY(1.1);">0</span></div>
<div style="left:220px;top:686px;width:16px;height:9px;background:#D4D0C8;border-top:1px solid #D4D0C8;border-left:1px solid #D4D0C8;border-right:1px solid #404040;border-bottom:1px solid #404040;box-shadow:inset 1px 1px 0 #fff, inset -1px -1px 0 #808080;"></div>
<svg style="left:225px;top:689px" width="5" height="3"><rect x="2" y="0" width="1" height="1"/><rect x="1" y="1" width="3" height="1"/><rect x="0" y="2" width="5" height="1"/></svg>
<div style="left:220px;top:695px;width:16px;height:9px;background:#D4D0C8;border-top:1px solid #D4D0C8;border-left:1px solid #D4D0C8;border-right:1px solid #404040;border-bottom:1px solid #404040;box-shadow:inset 1px 1px 0 #fff, inset -1px -1px 0 #808080;"></div>
<svg style="left:225px;top:698px" width="5" height="3"><rect x="0" y="0" width="5" height="1"/><rect x="1" y="1" width="3" height="1"/><rect x="2" y="2" width="1" height="1"/></svg>
<div class="b" style="left:248px;top:684px;width:72px;height:22px;background:#fff;border-top:1px solid #808080;border-left:1px solid #808080;border-right:1px solid #fff;border-bottom:1px solid #fff;box-shadow:inset 1px 1px 0 #404040, inset -1px -1px 0 #D4D0C8;"><span style="position:absolute;left:0px;top:-2px;bottom:2px;display:flex;align-items:center;font-size:13px;color:#000;transform:scaleY(1.1);">0</span></div>
<div style="left:302px;top:686px;width:16px;height:9px;background:#D4D0C8;border-top:1px solid #D4D0C8;border-left:1px solid #D4D0C8;border-right:1px solid #404040;border-bottom:1px solid #404040;box-shadow:inset 1px 1px 0 #fff, inset -1px -1px 0 #808080;"></div>
<svg style="left:307px;top:689px" width="5" height="3"><rect x="2" y="0" width="1" height="1"/><rect x="1" y="1" width="3" height="1"/><rect x="0" y="2" width="5" height="1"/></svg>
<div style="left:302px;top:695px;width:16px;height:9px;background:#D4D0C8;border-top:1px solid #D4D0C8;border-left:1px solid #D4D0C8;border-right:1px solid #404040;border-bottom:1px solid #404040;box-shadow:inset 1px 1px 0 #fff, inset -1px -1px 0 #808080;"></div>
<svg style="left:307px;top:698px" width="5" height="3"><rect x="0" y="0" width="5" height="1"/><rect x="1" y="1" width="3" height="1"/><rect x="2" y="2" width="1" height="1"/></svg>
<div class="t" style="left:169px;top:719.00px;font-size:13px;line-height:13px;color:#000;font-weight:normal;transform:scaleY(1.1);transform-origin:50% 11.00px;">CPU %: 23,4</div>
<div style="left:340px;top:552px;width:153px;height:100px;border:1px solid #808080;box-sizing:border-box;box-shadow:1px 1px 0 #fff, inset 1px 1px 0 #fff;"></div>
<div class="t" style="left:348px;top:548.00px;font-size:13px;line-height:13px;background:#D4D0C8;padding:0 3px 0 2px;transform:scaleY(1.1);transform-origin:50% 11.00px;">DSP</div>
<div class="b" style="left:355px;top:576px;width:62px;height:22px;background:#D4D0C8;border-top:1px solid #fff;border-left:1px solid #fff;border-right:1px solid #404040;border-bottom:1px solid #404040;box-shadow:inset -1px -1px 0 #808080;"><span style="position:absolute;left:0px;right:0;top:-2px;bottom:0;display:flex;align-items:center;justify-content:center;font-size:13px;color:#000;transform:scaleY(1.1);">NR</span></div>
<div class="b" style="left:417px;top:576px;width:61px;height:22px;background:#D4D0C8;border-top:1px solid #fff;border-left:1px solid #fff;border-right:1px solid #404040;border-bottom:1px solid #404040;box-shadow:inset -1px -1px 0 #808080;"><span style="position:absolute;left:0px;right:0;top:-2px;bottom:0;display:flex;align-items:center;justify-content:center;font-size:13px;color:#000;transform:scaleY(1.1);">ANF</span></div>
<div class="b" style="left:355px;top:598px;width:62px;height:22px;background:#D4D0C8;border-top:1px solid #fff;border-left:1px solid #fff;border-right:1px solid #404040;border-bottom:1px solid #404040;box-shadow:inset -1px -1px 0 #808080;"><span style="position:absolute;left:0px;right:0;top:-2px;bottom:0;display:flex;align-items:center;justify-content:center;font-size:13px;color:#000;transform:scaleY(1.1);">NB</span></div>
<div class="b" style="left:417px;top:598px;width:61px;height:22px;background:#D4D0C8;border-top:1px solid #fff;border-left:1px solid #fff;border-right:1px solid #404040;border-bottom:1px solid #404040;box-shadow:inset -1px -1px 0 #808080;"><span style="position:absolute;left:0px;right:0;top:-2px;bottom:0;display:flex;align-items:center;justify-content:center;font-size:13px;color:#000;transform:scaleY(1.1);">NB2</span></div>
<div class="b" style="left:355px;top:620px;width:62px;height:22px;background:#FFFF00;border:1px solid #404000;"><span style="position:absolute;left:2px;right:0;top:0px;bottom:0;display:flex;align-items:center;justify-content:center;font-size:13px;color:#000;transform:scaleY(1.1);">SR</span></div>
<div class="b" style="left:417px;top:620px;width:61px;height:22px;background:#D4D0C8;border-top:1px solid #fff;border-left:1px solid #fff;border-right:1px solid #404040;border-bottom:1px solid #404040;box-shadow:inset -1px -1px 0 #808080;"><span style="position:absolute;left:0px;right:0;top:-2px;bottom:0;display:flex;align-items:center;justify-content:center;font-size:13px;color:#000;transform:scaleY(1.1);">BIN</span></div>
<div style="left:504px;top:552px;width:132px;height:100px;border:1px solid #808080;box-sizing:border-box;box-shadow:1px 1px 0 #fff, inset 1px 1px 0 #fff;"></div>
<div class="t" style="left:512px;top:548.00px;font-size:13px;line-height:13px;background:#D4D0C8;padding:0 3px 0 2px;transform:scaleY(1.1);transform-origin:50% 11.00px;">Display Mode</div>
<div class="b" style="left:514px;top:576px;width:113px;height:24px;background:#fff;border-top:1px solid #808080;border-left:1px solid #808080;border-right:1px solid #fff;border-bottom:1px solid #fff;box-shadow:inset 1px 1px 0 #404040, inset -1px -1px 0 #D4D0C8;"><span style="position:absolute;left:3px;top:0px;bottom:0px;display:flex;align-items:center;font-size:13px;color:#000;transform:scaleY(1.1);">Panadapter</span></div>
<div style="left:606px;top:578px;width:19px;height:20px;background:#D4D0C8;border-top:1px solid #D4D0C8;border-left:1px solid #D4D0C8;border-right:1px solid #404040;border-bottom:1px solid #404040;box-shadow:inset 1px 1px 0 #fff, inset -1px -1px 0 #808080;"></div>
<svg style="left:611px;top:586px" width="9" height="5"><polygon points="0,0 9,0 4.5,5" fill="#000"/></svg>
<div class="b" style="left:514px;top:615px;width:51px;height:25px;background:#FFFF00;border:1px solid #404000;"><span style="position:absolute;left:2px;right:0;top:2px;bottom:0;display:flex;align-items:center;justify-content:center;font-size:13px;color:#000;transform:scaleY(1.1);">AVG</span></div>
<div class="b" style="left:576px;top:615px;width:51px;height:25px;background:#D4D0C8;border-top:1px solid #fff;border-left:1px solid #fff;border-right:1px solid #404040;border-bottom:1px solid #404040;box-shadow:inset -1px -1px 0 #808080;"><span style="position:absolute;left:0px;right:0;top:0px;bottom:0;display:flex;align-items:center;justify-content:center;font-size:13px;color:#000;transform:scaleY(1.1);">Peak</span></div>
<div style="left:340px;top:660px;width:296px;height:82px;border:1px solid #808080;box-sizing:border-box;box-shadow:1px 1px 0 #fff, inset 1px 1px 0 #fff;"></div>
<div class="t" style="left:348px;top:656.00px;font-size:13px;line-height:13px;background:#D4D0C8;padding:0 3px 0 2px;transform:scaleY(1.1);transform-origin:50% 11.00px;">MultiRX</div>
<div style="left:366px;top:684px;width:4px;height:43px;border-top:1px solid #808080;border-left:1px solid #808080;border-right:1px solid #fff;border-bottom:1px solid #fff;box-shadow:inset 1px 1px 0 #404040;"></div>
<svg style="left:362px;top:680px" width="15" height="7"><polygon points="0.5,0.5 11.5,0.5 14.5,3.5 11.5,6.5 0.5,6.5" fill="#D4D0C8"/><polyline points="0.5,6.5 0.5,0.5 11.5,0.5 14.5,3.5" fill="none" stroke="#fff" stroke-width="1"/><polyline points="0.5,6.5 11.5,6.5 14.5,3.5" fill="none" stroke="#404040" stroke-width="1"/></svg>
<div style="left:398px;top:682px;width:109px;height:4px;border-top:1px solid #808080;border-left:1px solid #808080;border-right:1px solid #fff;border-bottom:1px solid #fff;box-shadow:inset 1px 1px 0 #404040;"></div>
<svg style="left:448px;top:676px" width="9" height="17"><polygon points="0.5,0.5 8.5,0.5 8.5,12.5 4.5,16.5 0.5,12.5" fill="#D4D0C8"/><polyline points="0.5,12.5 0.5,0.5 8,0.5" fill="none" stroke="#fff" stroke-width="1"/><polyline points="8.5,0 8.5,12.5 4.5,16.5" fill="none" stroke="#404040" stroke-width="1"/><polyline points="7.5,1 7.5,12.0 4.5,15.5" fill="none" stroke="#808080" stroke-width="1"/><polyline points="0.5,12.5 4.5,16.5" fill="none" stroke="#fff" stroke-width="1"/></svg>
<div style="left:398px;top:711px;width:109px;height:4px;border-top:1px solid #808080;border-left:1px solid #808080;border-right:1px solid #fff;border-bottom:1px solid #fff;box-shadow:inset 1px 1px 0 #404040;"></div>
<svg style="left:448px;top:705px" width="9" height="18"><polygon points="0.5,0.5 8.5,0.5 8.5,13.5 4.5,17.5 0.5,13.5" fill="#D4D0C8"/><polyline points="0.5,13.5 0.5,0.5 8,0.5" fill="none" stroke="#fff" stroke-width="1"/><polyline points="8.5,0 8.5,13.5 4.5,17.5" fill="none" stroke="#404040" stroke-width="1"/><polyline points="7.5,1 7.5,13.0 4.5,16.5" fill="none" stroke="#808080" stroke-width="1"/><polyline points="0.5,13.5 4.5,17.5" fill="none" stroke="#fff" stroke-width="1"/></svg>
<div style="left:402px;top:695px;width:1px;height:3px;background:#000;"></div>
<div style="left:402px;top:725px;width:1px;height:3px;background:#000;"></div>
<div style="left:427px;top:695px;width:1px;height:3px;background:#000;"></div>
<div style="left:427px;top:725px;width:1px;height:3px;background:#000;"></div>
<div style="left:452px;top:695px;width:1px;height:3px;background:#000;"></div>
<div style="left:452px;top:725px;width:1px;height:3px;background:#000;"></div>
<div style="left:477px;top:695px;width:1px;height:3px;background:#000;"></div>
<div style="left:477px;top:725px;width:1px;height:3px;background:#000;"></div>
<div style="left:502px;top:695px;width:1px;height:3px;background:#000;"></div>
<div style="left:502px;top:725px;width:1px;height:3px;background:#000;"></div>
<div style="left:529px;top:684px;width:4px;height:43px;border-top:1px solid #808080;border-left:1px solid #808080;border-right:1px solid #fff;border-bottom:1px solid #fff;box-shadow:inset 1px 1px 0 #404040;"></div>
<svg style="left:526px;top:680px" width="15" height="7"><polygon points="0.5,0.5 11.5,0.5 14.5,3.5 11.5,6.5 0.5,6.5" fill="#D4D0C8"/><polyline points="0.5,6.5 0.5,0.5 11.5,0.5 14.5,3.5" fill="none" stroke="#fff" stroke-width="1"/><polyline points="0.5,6.5 11.5,6.5 14.5,3.5" fill="none" stroke="#404040" stroke-width="1"/></svg>
<div class="b" style="left:555px;top:674px;width:72px;height:24px;background:#D4D0C8;border-top:1px solid #fff;border-left:1px solid #fff;border-right:1px solid #404040;border-bottom:1px solid #404040;box-shadow:inset -1px -1px 0 #808080;"><span style="position:absolute;left:0px;right:0;top:0px;bottom:0;display:flex;align-items:center;justify-content:center;font-size:13px;color:#000;transform:scaleY(1.1);">MultiRX</span></div>
<div style="left:554px;top:716px;width:13px;height:13px;background:#fff;border-top:1px solid #808080;border-left:1px solid #808080;border-right:1px solid #fff;border-bottom:1px solid #fff;box-shadow:inset 1px 1px 0 #404040, inset -1px -1px 0 #D4D0C8;"></div>
<div class="t" style="left:572px;top:717.00px;font-size:13px;line-height:13px;color:#000;font-weight:normal;transform:scaleY(1.1);transform-origin:50% 11.00px;">Swap</div>
<div style="left:647px;top:552px;width:429px;height:189px;border:1px solid #808080;box-sizing:border-box;box-shadow:1px 1px 0 #fff, inset 1px 1px 0 #fff;"></div>
<div class="t" style="left:655px;top:548.00px;font-size:13px;line-height:13px;background:#D4D0C8;padding:0 3px 0 2px;transform:scaleY(1.1);transform-origin:50% 11.00px;">Mode Specific Controls - CW</div>
<div class="t" style="left:669px;top:579.00px;font-size:13px;line-height:13px;color:#000;font-weight:normal;transform:scaleY(1.1);transform-origin:50% 11.00px;">CW Speed:</div>
<div class="b" style="left:749px;top:576px;width:52px;height:22px;background:#fff;border-top:1px solid #808080;border-left:1px solid #808080;border-right:1px solid #fff;border-bottom:1px solid #fff;box-shadow:inset 1px 1px 0 #404040, inset -1px -1px 0 #D4D0C8;"><span style="position:absolute;left:0px;top:-2px;bottom:2px;display:flex;align-items:center;font-size:13px;color:#000;transform:scaleY(1.1);">25</span></div>
<div style="left:783px;top:578px;width:16px;height:9px;background:#D4D0C8;border-top:1px solid #D4D0C8;border-left:1px solid #D4D0C8;border-right:1px solid #404040;border-bottom:1px solid #404040;box-shadow:inset 1px 1px 0 #fff, inset -1px -1px 0 #808080;"></div>
<svg style="left:788px;top:581px" width="5" height="3"><rect x="2" y="0" width="1" height="1"/><rect x="1" y="1" width="3" height="1"/><rect x="0" y="2" width="5" height="1"/></svg>
<div style="left:783px;top:587px;width:16px;height:9px;background:#D4D0C8;border-top:1px solid #D4D0C8;border-left:1px solid #D4D0C8;border-right:1px solid #404040;border-bottom:1px solid #404040;box-shadow:inset 1px 1px 0 #fff, inset -1px -1px 0 #808080;"></div>
<svg style="left:788px;top:590px" width="5" height="3"><rect x="0" y="0" width="5" height="1"/><rect x="1" y="1" width="3" height="1"/><rect x="2" y="2" width="1" height="1"/></svg>
<div class="t" style="left:813px;top:579.00px;font-size:13px;line-height:13px;color:#000;font-weight:normal;transform:scaleY(1.1);transform-origin:50% 11.00px;">Pitch Freq (Hz):</div>
<div class="b" style="left:913px;top:576px;width:62px;height:22px;background:#fff;border-top:1px solid #808080;border-left:1px solid #808080;border-right:1px solid #fff;border-bottom:1px solid #fff;box-shadow:inset 1px 1px 0 #404040, inset -1px -1px 0 #D4D0C8;"><span style="position:absolute;left:0px;top:-2px;bottom:2px;display:flex;align-items:center;font-size:13px;color:#000;transform:scaleY(1.1);">600</span></div>
<div style="left:957px;top:578px;width:16px;height:9px;background:#D4D0C8;border-top:1px solid #D4D0C8;border-left:1px solid #D4D0C8;border-right:1px solid #404040;border-bottom:1px solid #404040;box-shadow:inset 1px 1px 0 #fff, inset -1px -1px 0 #808080;"></div>
<svg style="left:962px;top:581px" width="5" height="3"><rect x="2" y="0" width="1" height="1"/><rect x="1" y="1" width="3" height="1"/><rect x="0" y="2" width="5" height="1"/></svg>
<div style="left:957px;top:587px;width:16px;height:9px;background:#D4D0C8;border-top:1px solid #D4D0C8;border-left:1px solid #D4D0C8;border-right:1px solid #404040;border-bottom:1px solid #404040;box-shadow:inset 1px 1px 0 #fff, inset -1px -1px 0 #808080;"></div>
<svg style="left:962px;top:590px" width="5" height="3"><rect x="0" y="0" width="5" height="1"/><rect x="1" y="1" width="3" height="1"/><rect x="2" y="2" width="1" height="1"/></svg>
<div class="b" style="left:995px;top:576px;width:59px;height:23px;background:#D4D0C8;border-top:1px solid #fff;border-left:1px solid #fff;border-right:1px solid #404040;border-bottom:1px solid #404040;box-shadow:inset -1px -1px 0 #808080;"><span style="position:absolute;left:0px;right:0;top:0px;bottom:0;display:flex;align-items:center;justify-content:center;font-size:13px;color:#000;transform:scaleY(1.1);">VAC</span></div>
<div style="left:674px;top:613px;width:114px;height:4px;border-top:1px solid #808080;border-left:1px solid #808080;border-right:1px solid #fff;border-bottom:1px solid #fff;box-shadow:inset 1px 1px 0 #404040;"></div>
<svg style="left:717px;top:608px" width="9" height="19"><polygon points="0.5,0.5 8.5,0.5 8.5,14.5 4.5,18.5 0.5,14.5" fill="#D4D0C8"/><polyline points="0.5,14.5 0.5,0.5 8,0.5" fill="none" stroke="#fff" stroke-width="1"/><polyline points="8.5,0 8.5,14.5 4.5,18.5" fill="none" stroke="#404040" stroke-width="1"/><polyline points="7.5,1 7.5,14.0 4.5,17.5" fill="none" stroke="#808080" stroke-width="1"/><polyline points="0.5,14.5 4.5,18.5" fill="none" stroke="#fff" stroke-width="1"/></svg>
<div style="left:667px;top:638px;width:13px;height:13px;background:#fff;border-top:1px solid #808080;border-left:1px solid #808080;border-right:1px solid #fff;border-bottom:1px solid #fff;box-shadow:inset 1px 1px 0 #404040, inset -1px -1px 0 #D4D0C8;"></div>
<svg style="left:667px;top:638px" width="13" height="13"><polyline points="3,6 5,8.5 10,3.5" fill="none" stroke="#000" stroke-width="2"/></svg>
<div class="t" style="left:685px;top:637.90px;font-size:14.3px;line-height:14.3px;color:#000;font-weight:normal;">Iambic</div>
<div style="left:667px;top:667px;width:13px;height:13px;background:#fff;border-top:1px solid #808080;border-left:1px solid #808080;border-right:1px solid #fff;border-bottom:1px solid #fff;box-shadow:inset 1px 1px 0 #404040, inset -1px -1px 0 #D4D0C8;"></div>
<div class="t" style="left:685px;top:666.90px;font-size:14.3px;line-height:14.3px;color:#000;font-weight:normal;">Disable Monitor</div>
<div style="left:667px;top:707px;width:13px;height:13px;background:#fff;border-top:1px solid #808080;border-left:1px solid #808080;border-right:1px solid #fff;border-bottom:1px solid #fff;box-shadow:inset 1px 1px 0 #404040, inset -1px -1px 0 #D4D0C8;"></div>
<div class="t" style="left:686px;top:700.00px;font-size:13px;line-height:13px;color:#000;font-weight:normal;transform:scaleY(1.1);transform-origin:50% 11.00px;">Show TX CW</div>
<div class="t" style="left:686px;top:715.00px;font-size:13px;line-height:13px;color:#000;font-weight:normal;transform:scaleY(1.1);transform-origin:50% 11.00px;">Frequency</div>
<div style="left:811px;top:621px;width:260px;height:56px;border:1px solid #808080;box-sizing:border-box;box-shadow:1px 1px 0 #fff, inset 1px 1px 0 #fff;"></div>
<div class="t" style="left:819px;top:617.00px;font-size:13px;line-height:13px;background:#D4D0C8;padding:0 3px 0 2px;transform:scaleY(1.1);transform-origin:50% 11.00px;">Break In</div>
<div style="left:831px;top:647px;width:13px;height:13px;background:#fff;border-top:1px solid #808080;border-left:1px solid #808080;border-right:1px solid #fff;border-bottom:1px solid #fff;box-shadow:inset 1px 1px 0 #404040, inset -1px -1px 0 #D4D0C8;"></div>
<svg style="left:831px;top:647px" width="13" height="13"><polyline points="3,6 5,8.5 10,3.5" fill="none" stroke="#000" stroke-width="2"/></svg>
<div class="t" style="left:849px;top:647.90px;font-size:14.3px;line-height:14.3px;color:#000;font-weight:normal;">Enabled</div>
<div class="t" style="left:927px;top:649.00px;font-size:13px;line-height:13px;color:#000;font-weight:normal;transform:scaleY(1.1);transform-origin:50% 11.00px;">Delay (ms):</div>
<div class="b" style="left:1006px;top:645px;width:60px;height:22px;background:#fff;border-top:1px solid #808080;border-left:1px solid #808080;border-right:1px solid #fff;border-bottom:1px solid #fff;box-shadow:inset 1px 1px 0 #404040, inset -1px -1px 0 #D4D0C8;"><span style="position:absolute;left:0px;top:-2px;bottom:2px;display:flex;align-items:center;font-size:13px;color:#000;transform:scaleY(1.1);">60</span></div>
<div style="left:1048px;top:647px;width:16px;height:9px;background:#D4D0C8;border-top:1px solid #D4D0C8;border-left:1px solid #D4D0C8;border-right:1px solid #404040;border-bottom:1px solid #404040;box-shadow:inset 1px 1px 0 #fff, inset -1px -1px 0 #808080;"></div>
<svg style="left:1053px;top:650px" width="5" height="3"><rect x="2" y="0" width="1" height="1"/><rect x="1" y="1" width="3" height="1"/><rect x="0" y="2" width="5" height="1"/></svg>
<div style="left:1048px;top:656px;width:16px;height:9px;background:#D4D0C8;border-top:1px solid #D4D0C8;border-left:1px solid #D4D0C8;border-right:1px solid #404040;border-bottom:1px solid #404040;box-shadow:inset 1px 1px 0 #fff, inset -1px -1px 0 #808080;"></div>
<svg style="left:1053px;top:659px" width="5" height="3"><rect x="0" y="0" width="5" height="1"/><rect x="1" y="1" width="3" height="1"/><rect x="2" y="2" width="1" height="1"/></svg>
<svg style="left:168px;top:183px" width="897" height="291"><rect x="453" y="18" width="23" height="291" fill="#008000"/><rect x="0" y="18" width="897" height="1" fill="#800080"/><rect x="0" y="37" width="897" height="1" fill="#800080"/><rect x="0" y="55" width="897" height="1" fill="#800080"/><rect x="0" y="74" width="897" height="1" fill="#800080"/><rect x="0" y="92" width="897" height="1" fill="#800080"/><rect x="0" y="111" width="897" height="1" fill="#800080"/><rect x="0" y="129" width="897" height="1" fill="#800080"/><rect x="0" y="148" width="897" height="1" fill="#800080"/><rect x="0" y="166" width="897" height="1" fill="#800080"/><rect x="0" y="185" width="897" height="1" fill="#800080"/><rect x="0" y="203" width="897" height="1" fill="#800080"/><rect x="0" y="222" width="897" height="1" fill="#800080"/><rect x="0" y="240" width="897" height="1" fill="#800080"/><rect x="0" y="258" width="897" height="1" fill="#800080"/><rect x="0" y="277" width="897" height="1" fill="#800080"/><rect x="18" y="18" width="1" height="273" fill="#800080"/><line x1="131.5" y1="18" x2="131.5" y2="291" stroke="#800080" stroke-width="1" stroke-dasharray="1,1"/><rect x="244" y="18" width="1" height="273" fill="#FF0000"/><line x1="356.5" y1="18" x2="356.5" y2="291" stroke="#800080" stroke-width="1" stroke-dasharray="1,1"/><rect x="469" y="18" width="1" height="273" fill="#800080"/><line x1="581.5" y1="18" x2="581.5" y2="291" stroke="#800080" stroke-width="1" stroke-dasharray="1,1"/><rect x="694" y="18" width="1" height="273" fill="#800080"/><line x1="807.5" y1="18" x2="807.5" y2="291" stroke="#800080" stroke-width="1" stroke-dasharray="1,1"/><rect x="451" y="18" width="2" height="273" fill="#FF0000"/><polyline points="-2.0,207.6 1.0,211.9 2.0,216.0 3.0,211.1 5.0,217.4 7.0,218.0 10.0,212.0 12.0,210.7 13.0,214.4 16.0,216.1 17.0,209.7 20.0,209.5 22.0,207.0 24.0,211.9 26.0,213.5 27.0,214.3 30.0,217.1 32.0,215.5 34.0,217.7 36.0,213.8 38.0,214.0 40.0,209.6 42.0,218.4 45.0,213.6 46.0,204.2 48.0,213.5 51.0,215.8 52.0,215.1 54.0,208.7 55.0,224.0 57.0,218.6 59.0,214.2 61.0,204.7 63.0,212.6 65.0,209.4 68.0,214.2 70.0,214.4 72.0,223.2 73.0,220.4 74.0,207.3 76.0,208.6 78.0,213.0 79.0,205.8 81.0,217.0 82.0,212.1 84.0,221.0 86.0,212.4 88.0,213.9 89.0,215.6 92.0,215.8 93.0,214.0 95.0,214.1 97.0,214.0 99.0,213.1 101.0,214.6 102.0,213.2 104.0,212.8 106.0,207.9 109.0,215.6 111.0,210.6 112.0,207.3 114.0,203.0 116.0,212.6 117.0,209.7 120.0,217.9 122.0,215.8 124.0,213.6 127.0,218.1 130.0,215.7 131.0,213.0 133.0,208.4 136.0,219.2 138.0,212.5 140.0,217.2 143.0,214.3 145.0,211.0 147.0,214.7 149.0,215.5 151.0,208.8 153.0,214.5 154.0,212.5 155.0,204.5 156.0,209.0 158.0,208.0 160.0,207.9 162.0,209.1 164.0,207.8 166.0,207.5 168.0,208.9 170.0,211.2 171.0,212.0 173.0,213.2 174.0,212.7 176.0,201.9 179.0,211.6 182.0,211.7 183.0,213.8 185.0,200.5 187.0,217.8 189.0,204.3 191.0,209.7 192.0,203.0 193.0,208.5 195.0,217.1 197.0,213.5 199.0,210.1 200.0,204.0 203.0,208.3 206.0,206.5 209.0,203.0 211.0,206.3 212.0,207.3 213.0,204.0 214.0,200.5 216.0,203.4 218.0,206.9 220.0,206.8 222.0,206.7 225.0,208.7 227.0,206.7 229.0,199.2 232.0,208.4 235.0,196.8 238.0,174.0 240.0,195.4 242.0,200.4 244.0,200.3 246.0,205.7 249.0,209.4 251.0,203.2 252.0,209.6 253.0,205.4 254.0,201.2 255.0,200.8 256.0,205.7 258.0,202.3 260.0,191.0 262.0,202.3 264.0,204.0 267.0,195.5 270.0,201.5 272.0,192.8 274.0,203.2 275.0,201.0 277.0,200.2 279.0,198.7 281.0,193.5 283.0,189.0 285.0,203.9 287.0,190.8 289.0,193.6 291.0,200.3 294.0,194.3 296.0,200.2 298.0,199.5 300.0,201.0 302.0,202.3 304.0,198.3 307.0,182.0 309.0,198.3 311.0,200.1 313.0,199.4 316.0,197.3 319.0,198.5 322.0,196.7 324.0,199.6 326.0,197.7 328.0,179.0 330.0,190.8 331.0,182.7 334.0,190.4 335.0,179.3 337.0,190.3 339.0,191.2 341.0,183.2 342.0,197.0 343.0,194.2 345.0,186.5 347.0,170.5 349.0,185.0 350.0,194.8 353.0,189.1 356.0,183.4 358.0,186.7 360.0,184.0 362.0,182.6 364.0,182.3 366.0,181.1 368.0,181.0 370.0,176.6 373.0,162.0 375.0,176.8 378.0,185.9 380.0,177.0 383.0,182.2 385.0,173.6 388.0,174.7 391.0,178.6 392.0,175.6 394.0,170.7 396.0,150.0 398.0,170.6 399.0,166.5 401.0,167.9 403.0,163.9 405.0,167.9 407.0,169.7 409.0,166.3 411.0,164.2 413.0,169.9 415.0,157.8 418.0,139.0 420.0,153.3 422.0,161.4 424.0,159.3 425.0,159.2 426.0,158.1 428.0,154.1 431.0,155.6 432.0,154.5 435.0,150.4 437.0,146.5 438.0,137.9 440.0,127.0 442.0,140.5 444.0,135.5 447.0,141.1 449.0,127.0 451.0,125.0 453.0,113.0 455.0,100.0 456.5,88.0 457.5,80.0 458.3,85.0 459.3,75.0 460.5,62.0 461.5,47.0 462.3,31.0 463.0,18.0 464.0,17.0 465.0,23.0 465.6,33.0 466.5,57.0 467.5,72.0 468.5,82.0 469.5,89.0 471.0,100.0 473.0,110.0 475.0,119.0 477.0,125.0 479.0,130.2 480.0,139.8 482.0,140.9 483.0,138.4 485.0,128.0 487.0,142.2 488.0,145.0 490.0,145.8 492.0,141.6 494.0,146.6 497.0,140.6 499.0,150.0 501.0,156.8 503.0,148.0 506.0,156.1 507.0,158.1 510.0,140.0 512.0,160.9 513.0,162.4 515.0,160.9 517.0,161.8 520.0,154.6 522.0,159.8 525.0,156.4 527.0,165.6 529.0,165.9 532.0,150.0 534.0,170.1 536.0,170.4 538.0,173.1 540.0,168.2 542.0,167.6 544.0,169.3 545.0,174.5 548.0,169.7 550.0,172.9 551.0,171.4 553.0,161.0 555.0,172.8 557.0,174.2 560.0,175.8 562.0,169.2 564.0,180.7 567.0,171.4 570.0,178.8 572.0,185.8 573.0,183.1 575.0,180.9 577.0,170.5 579.0,177.3 580.0,168.8 581.0,182.2 582.0,183.0 584.0,179.4 587.0,180.0 589.0,183.6 591.0,181.8 594.0,188.8 596.0,187.9 599.0,179.0 601.0,191.5 604.0,189.7 605.0,196.1 607.0,183.7 609.0,187.9 611.0,194.5 614.0,194.3 617.0,194.4 619.0,193.3 621.0,198.3 624.0,188.7 626.0,196.7 629.0,186.4 631.0,201.0 634.0,193.5 635.0,206.1 637.0,195.2 640.0,200.1 643.0,196.1 645.0,204.4 646.0,199.0 648.0,201.7 650.0,200.7 652.0,203.1 653.0,200.3 655.0,204.9 657.0,196.6 659.0,201.0 660.0,199.4 661.0,194.1 663.0,204.6 666.0,205.6 668.0,196.3 671.0,201.2 673.0,199.4 675.0,201.7 677.0,203.5 679.0,196.6 681.0,209.2 683.0,204.3 684.0,206.6 686.0,200.9 689.0,174.0 691.0,198.1 694.0,201.4 696.0,200.8 699.0,197.8 701.0,205.4 703.0,206.9 705.0,205.5 707.0,204.5 709.0,206.2 710.0,203.0 712.0,204.9 715.0,208.6 718.0,207.2 719.0,203.1 721.0,206.3 723.0,204.2 726.0,204.6 728.0,208.9 731.0,205.5 734.0,205.8 736.0,207.7 739.0,217.1 741.0,198.9 744.0,210.4 747.0,212.3 749.0,201.9 752.0,201.4 754.0,203.9 755.0,211.7 757.0,208.9 760.0,211.6 762.0,212.5 765.0,213.6 767.0,215.5 769.0,205.8 771.0,214.1 772.0,209.8 774.0,210.2 776.0,208.8 778.0,209.1 780.0,213.2 783.0,213.1 785.0,215.8 787.0,209.2 789.0,206.1 791.0,208.4 792.0,209.9 794.0,211.2 796.0,212.5 798.0,217.1 800.0,213.9 802.0,200.8 803.0,202.9 805.0,209.8 807.0,214.9 809.0,214.4 810.0,211.6 813.0,207.7 815.0,213.3 817.0,204.5 818.0,210.8 819.0,211.5 820.0,209.1 823.0,211.0 825.0,216.7 826.0,207.8 828.0,209.5 830.0,213.0 832.0,210.0 833.0,205.5 835.0,188.0 837.0,205.8 839.0,209.4 841.0,214.7 842.0,212.7 844.0,207.0 845.0,212.0 847.0,207.1 848.0,212.2 850.0,207.0 852.0,218.6 853.0,214.6 855.0,209.2 856.0,214.4 858.0,214.2 859.0,212.4 861.0,216.9 863.0,210.6 864.0,215.0 866.0,212.0 868.0,211.8 869.0,215.8 871.0,218.9 873.0,211.7 874.0,214.8 877.0,214.0 879.0,216.9 882.0,210.4 884.0,207.2 887.0,206.9 889.0,210.5 891.0,209.1 893.0,211.6 895.0,208.2 897.0,208.0" fill="none" stroke="#90EE90" stroke-width="1" shape-rendering="crispEdges"/><g transform="translate(3.5,16) scale(0.9,1)"><text x="0" y="0" fill="#FFFF00" font-size="16">27,990</text></g><g transform="translate(116.5,16) scale(0.9,1)"><text x="0" y="0" fill="#FFFF00" font-size="16">27,995</text></g><g transform="translate(229.5,16) scale(0.9,1)"><text x="0" y="0" fill="#FF0000" font-size="16">28,000</text></g><g transform="translate(341.5,16) scale(0.9,1)"><text x="0" y="0" fill="#FFFF00" font-size="16">28,005</text></g><g transform="translate(454.5,16) scale(0.9,1)"><text x="0" y="0" fill="#FFFF00" font-size="16">28,010</text></g><g transform="translate(566.5,16) scale(0.9,1)"><text x="0" y="0" fill="#FFFF00" font-size="16">28,015</text></g><g transform="translate(679.5,16) scale(0.9,1)"><text x="0" y="0" fill="#FFFF00" font-size="16">28,020</text></g><g transform="translate(792.5,16) scale(0.9,1)"><text x="0" y="0" fill="#FFFF00" font-size="16">28,025</text></g><g transform="translate(35,43.2) scale(0.9,1)"><text x="0" y="0" fill="#FFFF00" font-size="16" text-anchor="end">-20</text></g><g transform="translate(35,61.7) scale(0.9,1)"><text x="0" y="0" fill="#FFFF00" font-size="16" text-anchor="end">-30</text></g><g transform="translate(35,80.1) scale(0.9,1)"><text x="0" y="0" fill="#FFFF00" font-size="16" text-anchor="end">-40</text></g><g transform="translate(35,98.6) scale(0.9,1)"><text x="0" y="0" fill="#FFFF00" font-size="16" text-anchor="end">-50</text></g><g transform="translate(35,117.0) scale(0.9,1)"><text x="0" y="0" fill="#FFFF00" font-size="16" text-anchor="end">-60</text></g><g transform="translate(35,135.5) scale(0.9,1)"><text x="0" y="0" fill="#FFFF00" font-size="16" text-anchor="end">-70</text></g><g transform="translate(35,154.0) scale(0.9,1)"><text x="0" y="0" fill="#FFFF00" font-size="16" text-anchor="end">-80</text></g><g transform="translate(35,172.4) scale(0.9,1)"><text x="0" y="0" fill="#FFFF00" font-size="16" text-anchor="end">-90</text></g><g transform="translate(35,190.9) scale(0.9,1)"><text x="0" y="0" fill="#FFFF00" font-size="16" text-anchor="end">-100</text></g><g transform="translate(35,209.3) scale(0.9,1)"><text x="0" y="0" fill="#FFFF00" font-size="16" text-anchor="end">-110</text></g><g transform="translate(35,227.8) scale(0.9,1)"><text x="0" y="0" fill="#FFFF00" font-size="16" text-anchor="end">-120</text></g><g transform="translate(35,246.3) scale(0.9,1)"><text x="0" y="0" fill="#FFFF00" font-size="16" text-anchor="end">-130</text></g><g transform="translate(35,264.7) scale(0.9,1)"><text x="0" y="0" fill="#FFFF00" font-size="16" text-anchor="end">-140</text></g><g transform="translate(35,283.2) scale(0.9,1)"><text x="0" y="0" fill="#FFFF00" font-size="16" text-anchor="end">-150</text></g></svg>
<div class="t" style="left:185px;top:480.46px;font-size:16px;line-height:16px;color:#2090FF;font-weight:normal;">14280,4Hz</div>
<div class="t" style="left:297px;top:480.46px;font-size:16px;line-height:16px;color:#2090FF;font-weight:normal;">-142,7dBm</div>
<div class="t" style="left:406px;top:480.46px;font-size:16px;line-height:16px;color:#2090FF;font-weight:normal;">28,023 480 MHz</div>
<div class="t" style="left:726px;top:480.46px;font-size:16px;line-height:16px;color:#2090FF;font-weight:normal;">517,9Hz</div>
<div class="t" style="left:837px;top:480.46px;font-size:16px;line-height:16px;color:#2090FF;font-weight:normal;">-8,8dBm</div>
<div class="t" style="left:938px;top:480.46px;font-size:16px;line-height:16px;color:#2090FF;font-weight:normal;">28,009 718 MHz</div>
<div class="t" style="left:168px;top:515.00px;font-size:13px;line-height:13px;color:#000;font-weight:normal;transform:scaleY(1.1);transform-origin:50% 11.00px;">Pan:</div>
<div style="left:216px;top:518px;width:238px;height:4px;border-top:1px solid #808080;border-left:1px solid #808080;border-right:1px solid #fff;border-bottom:1px solid #fff;box-shadow:inset 1px 1px 0 #404040;"></div>
<svg style="left:378px;top:508px" width="13" height="26"><polygon points="0.5,0.5 12.5,0.5 12.5,19.5 6.5,25.5 0.5,19.5" fill="#D4D0C8"/><polyline points="0.5,19.5 0.5,0.5 12,0.5" fill="none" stroke="#fff" stroke-width="1"/><polyline points="12.5,0 12.5,19.5 6.5,25.5" fill="none" stroke="#404040" stroke-width="1"/><polyline points="11.5,1 11.5,19.0 6.5,24.5" fill="none" stroke="#808080" stroke-width="1"/><polyline points="0.5,19.5 6.5,25.5" fill="none" stroke="#fff" stroke-width="1"/></svg>
<div class="b" style="left:463px;top:509px;width:63px;height:25px;background:#D4D0C8;border-top:1px solid #fff;border-left:1px solid #fff;border-right:1px solid #404040;border-bottom:1px solid #404040;box-shadow:inset -1px -1px 0 #808080;"><span style="position:absolute;left:0px;right:0;top:1px;bottom:0;display:flex;align-items:center;justify-content:center;font-size:13px;color:#000;transform:scaleY(1.1);">Center</span></div>
<div class="t" style="left:557px;top:515.00px;font-size:13px;line-height:13px;color:#000;font-weight:normal;transform:scaleY(1.1);transform-origin:50% 11.00px;">Zoom:</div>
<div style="left:607px;top:518px;width:236px;height:4px;border-top:1px solid #808080;border-left:1px solid #808080;border-right:1px solid #fff;border-bottom:1px solid #fff;box-shadow:inset 1px 1px 0 #404040;"></div>
<svg style="left:742px;top:508px" width="13" height="26"><polygon points="0.5,0.5 12.5,0.5 12.5,19.5 6.5,25.5 0.5,19.5" fill="#D4D0C8"/><polyline points="0.5,19.5 0.5,0.5 12,0.5" fill="none" stroke="#fff" stroke-width="1"/><polyline points="12.5,0 12.5,19.5 6.5,25.5" fill="none" stroke="#404040" stroke-width="1"/><polyline points="11.5,1 11.5,19.0 6.5,24.5" fill="none" stroke="#808080" stroke-width="1"/><polyline points="0.5,19.5 6.5,25.5" fill="none" stroke="#fff" stroke-width="1"/></svg>
<div class="b" style="left:863px;top:509px;width:51px;height:25px;background:#D4D0C8;border-top:1px solid #fff;border-left:1px solid #fff;border-right:1px solid #404040;border-bottom:1px solid #404040;box-shadow:inset -1px -1px 0 #808080;"><span style="position:absolute;left:0px;right:0;top:1px;bottom:0;display:flex;align-items:center;justify-content:center;font-size:13px;color:#000;transform:scaleY(1.1);">0.5x</span></div>
<div class="b" style="left:924px;top:509px;width:41px;height:25px;background:#FFFF00;border-top:1px solid #FFFFD0;border-left:1px solid #FFFFD0;border-right:1px solid #000;border-bottom:1px solid #000;box-shadow:inset -1px -1px 0 #303000;"><span style="position:absolute;left:0px;right:0;top:1px;bottom:0;display:flex;align-items:center;justify-content:center;font-size:13px;color:#000;transform:scaleY(1.1);">1x</span></div>
<div class="b" style="left:975px;top:509px;width:41px;height:25px;background:#D4D0C8;border-top:1px solid #fff;border-left:1px solid #fff;border-right:1px solid #404040;border-bottom:1px solid #404040;box-shadow:inset -1px -1px 0 #808080;"><span style="position:absolute;left:0px;right:0;top:1px;bottom:0;display:flex;align-items:center;justify-content:center;font-size:13px;color:#000;transform:scaleY(1.1);">2x</span></div>
<div class="b" style="left:1025px;top:509px;width:42px;height:25px;background:#D4D0C8;border-top:1px solid #fff;border-left:1px solid #fff;border-right:1px solid #404040;border-bottom:1px solid #404040;box-shadow:inset -1px -1px 0 #808080;"><span style="position:absolute;left:0px;right:0;top:1px;bottom:0;display:flex;align-items:center;justify-content:center;font-size:13px;color:#000;transform:scaleY(1.1);">4x</span></div>
<svg style="left:1099px;top:150px" width="180" height="46"><rect x="0" y="41" width="89" height="2" fill="#fff"/><rect x="89" y="41" width="88" height="2" fill="#FF0000"/><rect x="18" y="36" width="2" height="5" fill="#fff"/><rect x="36" y="36" width="2" height="5" fill="#fff"/><rect x="54" y="36" width="2" height="5" fill="#fff"/><rect x="71" y="36" width="2" height="5" fill="#fff"/><rect x="89" y="36" width="2" height="5" fill="#fff"/><rect x="9" y="39" width="1" height="2" fill="#fff"/><rect x="27" y="39" width="1" height="2" fill="#fff"/><rect x="45" y="39" width="1" height="2" fill="#fff"/><rect x="62" y="39" width="1" height="2" fill="#fff"/><rect x="80" y="39" width="1" height="2" fill="#fff"/><text x="19" y="34" fill="#fff" font-size="11.5" font-weight="bold" text-anchor="middle">1</text><text x="36" y="34" fill="#fff" font-size="11.5" font-weight="bold" text-anchor="middle">3</text><text x="54" y="34" fill="#fff" font-size="11.5" font-weight="bold" text-anchor="middle">5</text><text x="71.5" y="34" fill="#fff" font-size="11.5" font-weight="bold" text-anchor="middle">7</text><text x="90.5" y="34" fill="#fff" font-size="11.5" font-weight="bold" text-anchor="middle">9</text><rect x="119" y="36" width="2" height="5" fill="#FF0000"/><rect x="147" y="36" width="2" height="5" fill="#FF0000"/><rect x="176" y="36" width="2" height="5" fill="#FF0000"/><rect x="105" y="39" width="1" height="2" fill="#FF0000"/><rect x="133" y="39" width="1" height="2" fill="#FF0000"/><rect x="161" y="39" width="1" height="2" fill="#FF0000"/><text x="119.5" y="34" fill="#FF0000" font-size="11.5" font-weight="bold" text-anchor="middle">+20</text><text x="147.5" y="34" fill="#FF0000" font-size="11.5" font-weight="bold" text-anchor="middle">+40</text><text x="170" y="34" fill="#FF0000" font-size="11.5" font-weight="bold" text-anchor="middle">+6</text><rect x="177" y="0" width="2" height="46" fill="#FFFF00"/></svg>
</body></html>
